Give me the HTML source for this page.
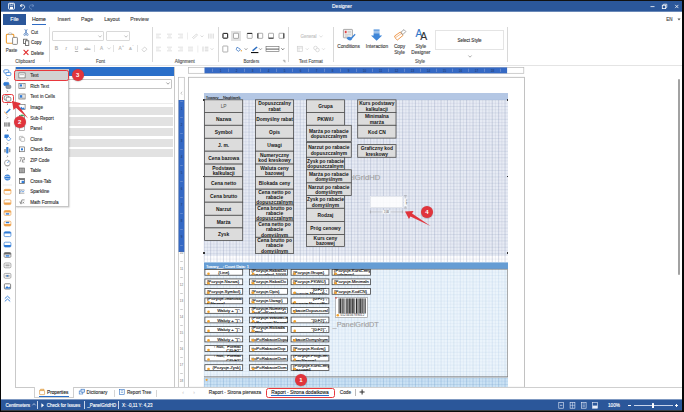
<!DOCTYPE html>
<html lang="en"><head><meta charset="utf-8"><title>Designer</title>
<style>
html,body{margin:0;padding:0;background:#fff;overflow:hidden}
body{width:684px;height:412px;position:relative;font-family:"Liberation Sans",sans-serif}
#w{position:absolute;left:0;top:0;width:684px;height:412px;overflow:hidden}
#w div{position:absolute}
.t{position:absolute;white-space:nowrap;line-height:1;-webkit-text-stroke:0.12px currentColor}
.a{position:absolute;overflow:visible}
.n{-webkit-text-stroke:0 !important}
#w .hc{background:#dcdcdc;border:0.7px solid #4a4a4a;box-sizing:border-box;color:#1a1a1a;font-weight:bold;text-align:center;overflow:hidden}
#w .hc .hi,#w .dc .hi{position:absolute;left:-10px;right:-10px;top:50%;transform:translateY(-50%);white-space:nowrap}
#w .hc .hi div,#w .dc .hi div{position:static}
#w .dc{background:#fff;border:0.7px solid #3c3c3c;box-sizing:border-box;color:#222;overflow:hidden}
#w .dc .hi{left:1px;right:1px}
#w .dc i{position:absolute;left:2.6px;bottom:-0.4px;width:2.4px;height:2.4px;border-radius:50%;background:#f0a030}
#w .bd{width:12.2px;height:12.2px;border-radius:50%;background:#e0343c;color:#fff;font-size:6px;line-height:12.4px;text-align:center;font-weight:bold;box-shadow:0 0.5px 1.2px rgba(0,0,0,0.3)}
</style></head><body><div id="w">
<div style="left:0px;top:0px;width:684px;height:412px;background:#fff"></div>
<svg class="a" style="left:0;top:0" width="684" height="13" viewBox="0 0 684 13"><rect width="684" height="11.7" fill="#2b579a"/><rect width="684" height="1" fill="#111"/></svg>
<div style="left:0px;top:0px;width:1px;height:412px;background:#060606"></div>
<div style="left:682.4px;top:0px;width:1.6px;height:412px;background:#060606"></div>
<span class="t" style="left:342px;top:3px;font-size:5.0px;line-height:6px;color:#fff;font-weight:normal;transform:translateX(-50%);">Designer</span>
<svg class="a" style="left:6.8px;top:2.2px" width="34" height="9" viewBox="0 0 34 9">
<rect x="1.5" y="1.2" width="6" height="6" rx="0.8" fill="none" stroke="#fff" stroke-width="0.8"/>
<rect x="3" y="1.4" width="3" height="1.8" fill="none" stroke="#fff" stroke-width="0.6"/>
<rect x="3" y="4.8" width="3" height="2.2" fill="#fff"/>
<path d="M14.5 2.2 L13.2 4 L15.2 4.4 M13.4 3.9 C15 2.2 18 3 17.6 5.2 C17.3 6.6 16 7.2 15 7.4" fill="none" stroke="#fff" stroke-width="0.9"/>
<path d="M25.5 2.2 L26.8 4 L24.8 4.4 M26.6 3.9 C25 2.2 22 3 22.4 5.2 C22.7 6.6 24 7.2 25 7.4" fill="none" stroke="#6f8fc4" stroke-width="0.8"/>
</svg>
<svg class="a" style="left:646px;top:2px" width="36" height="9" viewBox="0 0 36 9">
<path d="M4.5 4.6 H8.5" stroke="#fff" stroke-width="0.8"/>
<rect x="16.3" y="3.2" width="3.4" height="3.4" fill="none" stroke="#fff" stroke-width="0.8"/>
<path d="M17.6 3.2 V2.2 H20.8 V5.4 H19.7" fill="none" stroke="#fff" stroke-width="0.7"/>
<path d="M29.2 2.9 L32.4 6.1 M32.4 2.9 L29.2 6.1" stroke="#fff" stroke-width="0.8"/>
</svg>
<div style="left:3px;top:13.5px;width:23px;height:11px;background:#2b579a"></div>
<span class="t" style="left:14.5px;top:16px;font-size:5.2px;line-height:6px;color:#fff;font-weight:normal;transform:translateX(-50%);">File</span>
<span class="t" style="left:39px;top:16px;font-size:5.2px;line-height:6px;color:#222;font-weight:normal;transform:translateX(-50%);">Home</span>
<div style="left:32px;top:23.5px;width:14.2px;height:1.1px;background:#2f6bc4"></div>
<span class="t" style="left:64px;top:16px;font-size:5.2px;line-height:6px;color:#444;font-weight:normal;transform:translateX(-50%);">Insert</span>
<span class="t" style="left:87px;top:16px;font-size:5.2px;line-height:6px;color:#444;font-weight:normal;transform:translateX(-50%);">Page</span>
<span class="t" style="left:112px;top:16px;font-size:5.2px;line-height:6px;color:#444;font-weight:normal;transform:translateX(-50%);">Layout</span>
<span class="t" style="left:139.5px;top:16px;font-size:5.2px;line-height:6px;color:#444;font-weight:normal;transform:translateX(-50%);">Preview</span>
<span class="t" style="left:669.5px;top:17px;font-size:4.5px;line-height:5px;color:#444;font-weight:normal;transform:translateX(-50%);">EN</span>
<svg class="a" style="left:677px;top:17.6px" width="4" height="3"><path d="M0.5 0.6 L3.5 0.6 L2 2.4 Z" fill="#555"/></svg>
<div style="left:1px;top:65px;width:682px;height:0.7px;background:#e4e4e4"></div>
<div style="left:49.2px;top:27px;width:0.7px;height:35px;background:#d8d8d8"></div>
<div style="left:152px;top:27px;width:0.7px;height:35px;background:#d8d8d8"></div>
<div style="left:218.2px;top:27px;width:0.7px;height:35px;background:#d8d8d8"></div>
<div style="left:288px;top:27px;width:0.7px;height:35px;background:#d8d8d8"></div>
<div style="left:333.1px;top:27px;width:0.7px;height:35px;background:#d8d8d8"></div>
<div style="left:507.3px;top:27px;width:0.7px;height:35px;background:#d8d8d8"></div>
<span class="t" style="left:25px;top:59px;font-size:4.5px;line-height:5px;color:#555;font-weight:normal;transform:translateX(-50%);">Clipboard</span>
<span class="t" style="left:100.5px;top:59px;font-size:4.5px;line-height:5px;color:#555;font-weight:normal;transform:translateX(-50%);">Font</span>
<span class="t" style="left:184.7px;top:59px;font-size:4.5px;line-height:5px;color:#555;font-weight:normal;transform:translateX(-50%);">Alignment</span>
<span class="t" style="left:251.5px;top:59px;font-size:4.5px;line-height:5px;color:#555;font-weight:normal;transform:translateX(-50%);">Borders</span>
<span class="t" style="left:311px;top:59px;font-size:4.5px;line-height:5px;color:#555;font-weight:normal;transform:translateX(-50%);">Text Format</span>
<span class="t" style="left:420px;top:59px;font-size:4.5px;line-height:5px;color:#555;font-weight:normal;transform:translateX(-50%);">Style</span>
<svg class="a" style="left:4px;top:31px" width="16" height="15" viewBox="4 31 16 15">
<rect x="6.4" y="34.4" width="7.4" height="8.8" rx="0.9" fill="#fff" stroke="#f0a23a" stroke-width="1.15"/>
<path d="M8.6 34.6 V33.6 Q8.6 32.9 9.3 32.9 H11 Q11.7 32.9 11.7 33.6 V34.6 Z" fill="#fff" stroke="#9a9a9a" stroke-width="0.6"/>
<rect x="12.6" y="37.4" width="4.8" height="7" rx="0.7" fill="#fff" stroke="#6e6e6e" stroke-width="0.8"/>
</svg>
<span class="t" style="left:11.5px;top:48px;font-size:4.5px;line-height:5px;color:#444;font-weight:normal;transform:translateX(-50%);">Paste</span>
<svg class="a" style="left:22px;top:28px" width="9" height="29" viewBox="0 0 9 29">
<path d="M2.8 1.2 L5.2 6 M5.2 1.2 L2.8 6" stroke="#3b6fb6" stroke-width="0.7" fill="none"/>
<circle cx="2.7" cy="6.6" r="0.9" fill="none" stroke="#3b6fb6" stroke-width="0.6"/><circle cx="5.3" cy="6.6" r="0.9" fill="none" stroke="#3b6fb6" stroke-width="0.6"/>
<rect x="1.6" y="11.2" width="3.4" height="4.4" fill="#fff" stroke="#555" stroke-width="0.8"/>
<rect x="3.4" y="12.8" width="3.4" height="4.6" fill="#fff" stroke="#555" stroke-width="0.8"/>
<path d="M1.6 21.8 L6.4 26.8 M6.4 21.8 L1.6 26.8" stroke="#e02b2b" stroke-width="1.1"/>
</svg>
<span class="t" style="left:31px;top:30px;font-size:4.5px;line-height:5px;color:#333;font-weight:normal;">Cut</span>
<span class="t" style="left:31px;top:40px;font-size:4.5px;line-height:5px;color:#333;font-weight:normal;">Copy</span>
<span class="t" style="left:31px;top:51px;font-size:4.5px;line-height:5px;color:#333;font-weight:normal;">Delete</span>
<div style="left:51.5px;top:31px;width:52px;height:10px;border:0.7px solid #d9d9d9;border-radius:1px;box-sizing:border-box"></div>
<div style="left:105.5px;top:31px;width:24px;height:10px;border:0.7px solid #d9d9d9;border-radius:1px;box-sizing:border-box"></div>
<svg class="a" style="left:98px;top:34.5px" width="4" height="3"><path d="M0.4 0.5 L2 2.2 L3.6 0.5" fill="none" stroke="#999" stroke-width="0.6"/></svg>
<svg class="a" style="left:123.5px;top:34.5px" width="4" height="3"><path d="M0.4 0.5 L2 2.2 L3.6 0.5" fill="none" stroke="#999" stroke-width="0.6"/></svg>
<span class="t" style="left:56.5px;top:46px;font-size:4.6px;line-height:5px;color:#b5b5b5;font-weight:bold;transform:translateX(-50%);">B</span>
<span class="t" style="left:66px;top:46px;font-size:4.6px;line-height:5px;color:#b5b5b5;font-weight:normal;transform:translateX(-50%);font-style:italic;font-family:'Liberation Serif',serif">I</span>
<span class="t" style="left:76.5px;top:46px;font-size:4.6px;line-height:5px;color:#b5b5b5;font-weight:normal;transform:translateX(-50%);text-decoration:underline">U</span>
<span class="t" style="left:87.5px;top:47px;font-size:3.6px;line-height:4px;color:#b5b5b5;font-weight:normal;transform:translateX(-50%);text-decoration:line-through">abc</span>
<div style="left:94.2px;top:45px;width:0.6px;height:7px;background:#e2e2e2"></div>
<span class="t" style="left:101.5px;top:46px;font-size:4.6px;line-height:5px;color:#b5b5b5;font-weight:normal;transform:translateX(-50%);">A</span>
<svg class="a" style="left:106.5px;top:47.3px" width="4" height="3"><path d="M0.4 0.5 L2 2.2 L3.6 0.5" fill="none" stroke="#bbb" stroke-width="0.6"/></svg>
<div style="left:112.8px;top:45px;width:0.6px;height:7px;background:#e2e2e2"></div>
<span class="t" style="left:120px;top:46px;font-size:4.8px;line-height:5px;color:#b5b5b5;font-weight:normal;transform:translateX(-50%);">A</span>
<span class="t" style="left:123px;top:45px;font-size:3px;line-height:4px;color:#b5b5b5;font-weight:normal;transform:translateX(-50%);">^</span>
<span class="t" style="left:130.5px;top:46px;font-size:4.2px;line-height:5px;color:#b5b5b5;font-weight:normal;transform:translateX(-50%);">A</span>
<span class="t" style="left:133px;top:45px;font-size:3px;line-height:4px;color:#b5b5b5;font-weight:normal;transform:translateX(-50%);">ˇ</span>
<div style="left:136.6px;top:45px;width:0.6px;height:7px;background:#e2e2e2"></div>
<svg class="a" style="left:141px;top:45.5px" width="7" height="6" viewBox="0 0 7 6"><path d="M1 3.6 L3.6 1 L6 3.2 L3.8 5.4 L2.4 5.4 Z" fill="none" stroke="#bbb" stroke-width="0.6"/></svg>
<svg class="a" style="left:150px;top:28px" width="70" height="30" viewBox="150 28 70 30"><rect x="156.00" y="33.80" width="5" height="0.6" fill="#cdcdcd"/><rect x="156.00" y="35.70" width="3.4" height="0.6" fill="#cdcdcd"/><rect x="156.00" y="37.60" width="5" height="0.6" fill="#cdcdcd"/><rect x="167.00" y="33.80" width="5" height="0.6" fill="#cdcdcd"/><rect x="167.90" y="35.70" width="3.2" height="0.6" fill="#cdcdcd"/><rect x="167.00" y="37.60" width="5" height="0.6" fill="#cdcdcd"/><rect x="178.00" y="33.80" width="5" height="0.6" fill="#cdcdcd"/><rect x="179.60" y="35.70" width="3.4" height="0.6" fill="#cdcdcd"/><rect x="178.00" y="37.60" width="5" height="0.6" fill="#cdcdcd"/><rect x="156.00" y="46.80" width="5" height="0.6" fill="#cdcdcd"/><rect x="156.00" y="48.70" width="3.4" height="0.6" fill="#cdcdcd"/><rect x="156.00" y="50.60" width="5" height="0.6" fill="#cdcdcd"/><rect x="167.00" y="46.80" width="5" height="0.6" fill="#cdcdcd"/><rect x="167.90" y="48.70" width="3.2" height="0.6" fill="#cdcdcd"/><rect x="167.00" y="50.60" width="5" height="0.6" fill="#cdcdcd"/><rect x="178.00" y="46.80" width="5" height="0.6" fill="#cdcdcd"/><rect x="179.60" y="48.70" width="3.4" height="0.6" fill="#cdcdcd"/><rect x="178.00" y="50.60" width="5" height="0.6" fill="#cdcdcd"/><rect x="188.00" y="46.80" width="5" height="0.6" fill="#cdcdcd"/><rect x="188.00" y="48.70" width="5" height="0.6" fill="#cdcdcd"/><rect x="188.00" y="50.60" width="5" height="0.6" fill="#cdcdcd"/><rect x="187.3" y="32.5" width="0.6" height="7" fill="#e2e2e2"/><rect x="197.6" y="45.5" width="0.6" height="7" fill="#e2e2e2"/><path d="M192.5 37.5 L196.5 34 L197.5 35.2 L193.6 38.6 Z" fill="none" stroke="#c4c4c4" stroke-width="0.6"/><path d="M200.6 35.5 L202 37 L203.4 35.5" fill="none" stroke="#c4c4c4" stroke-width="0.6"/><path d="M208.8 33.6 V38.6 M211 33.6 V38.6 M213.2 33.6 V38.6" stroke="#c4c4c4" stroke-width="0.7"/><path d="M203 46.5 V51.6 M204.8 47.2 H208.4 M204.8 49 H208.4 M204.8 50.8 H208.4" stroke="#c4c4c4" stroke-width="0.7"/><path d="M210.6 48.3 L212 49.8 L213.4 48.3" fill="none" stroke="#c4c4c4" stroke-width="0.6"/></svg>
<div style="left:231px;top:31px;width:10px;height:10px;background:#e3e3e3"></div>
<svg class="a" style="left:220px;top:28px" width="68" height="36" viewBox="220 28 68 36"><rect x="222.8" y="33.25" width="5.0" height="5.1" rx="0.5" fill="#fff" stroke="#6f6f6f" stroke-width="0.55"/><rect x="223.0" y="33.45" width="4.6" height="4.699999999999999" rx="0.5" fill="none" stroke="#2a2a2a" stroke-width="1.0"/><rect x="233.5" y="33.25" width="5.0" height="5.1" rx="0.5" fill="#fff" stroke="#6f6f6f" stroke-width="0.55"/><rect x="247.2" y="33.25" width="5.0" height="5.1" rx="0.5" fill="#fff" stroke="#6f6f6f" stroke-width="0.55"/><path d="M247.2 33.45 H252.2" stroke="#2a2a2a" stroke-width="1.0"/><rect x="257.7" y="33.25" width="5.0" height="5.1" rx="0.5" fill="#fff" stroke="#6f6f6f" stroke-width="0.55"/><path d="M257.9 33.25 V38.349999999999994" stroke="#2a2a2a" stroke-width="1.0"/><rect x="268.5" y="33.25" width="5.0" height="5.1" rx="0.5" fill="#fff" stroke="#6f6f6f" stroke-width="0.55"/><path d="M268.5 38.14999999999999 H273.5" stroke="#2a2a2a" stroke-width="1.0"/><rect x="279.0" y="33.25" width="5.0" height="5.1" rx="0.5" fill="#fff" stroke="#6f6f6f" stroke-width="0.55"/><path d="M283.8 33.25 V38.349999999999994" stroke="#2a2a2a" stroke-width="1.0"/><rect x="222.8" y="46" width="5.0" height="6" rx="0.5" fill="#fff" stroke="#6f6f6f" stroke-width="0.55"/><path d="M237 47.2 L240.4 49.2 L238.6 51.4 L236.2 49.6 Z" fill="#fff" stroke="#2f6fc0" stroke-width="0.7"/><circle cx="241.3" cy="50.8" r="0.7" fill="#e8a33d"/><path d="M244.6 48.3 L246 49.8 L247.4 48.3" fill="none" stroke="#666" stroke-width="0.6"/><path d="M252 50.3 L256.6 46.4 L257.6 47.5 L253.2 51.2 Z" fill="#2f6fc0"/><rect x="251" y="52" width="7.4" height="1.1" fill="#111"/><path d="M259.1 48.3 L260.5 49.8 L261.9 48.3" fill="none" stroke="#666" stroke-width="0.6"/><rect x="266" y="46.6" width="13" height="5" fill="#fff" stroke="#666" stroke-width="0.6"/><path d="M266 49.1 H279" stroke="#444" stroke-width="0.9"/><path d="M281.4 48.3 L282.8 49.8 L284.2 48.3" fill="none" stroke="#444" stroke-width="0.7"/><path d="M283 60.3 H285 V62.3 M283.4 60.7 L285 62.3" fill="none" stroke="#777" stroke-width="0.5"/></svg>
<span class="t" style="left:308.5px;top:34px;font-size:4.5px;line-height:5px;color:#c2c2c2;font-weight:normal;transform:translateX(-50%);">General</span>
<svg class="a" style="left:319px;top:34.8px" width="4" height="3"><path d="M0.4 0.5 L2 2.2 L3.6 0.5" fill="none" stroke="#ccc" stroke-width="0.6"/></svg>
<svg class="a" style="left:296px;top:45px" width="32" height="9" viewBox="296 45 32 9">
<rect x="297.3" y="46.3" width="5" height="5" fill="none" stroke="#cfcfcf" stroke-width="0.7"/><path d="M297.3 48 H302.3 M299 48 V51.3" stroke="#cfcfcf" stroke-width="0.6"/>
<path d="M305.8 48.3 L307.2 49.8 L308.6 48.3" fill="none" stroke="#ccc" stroke-width="0.6"/>
<circle cx="315.5" cy="48" r="1.8" fill="none" stroke="#cfcfcf" stroke-width="0.7"/><circle cx="317.5" cy="50" r="1.8" fill="#fff" stroke="#cfcfcf" stroke-width="0.7"/>
<path d="M322.1 48.3 L323.5 49.8 L324.9 48.3" fill="none" stroke="#ccc" stroke-width="0.6"/>
</svg>
<svg class="a" style="left:340px;top:28px" width="90" height="16" viewBox="340 28 90 16">
<rect x="343.4" y="29.4" width="9" height="8.4" rx="0.5" fill="#f2f2f2" stroke="#8a8a8a" stroke-width="0.7"/>
<rect x="344.8" y="30.8" width="1.8" height="2.4" fill="#e04545"/><path d="M347.6 31.4 H351 M347.6 32.8 H351 M344.8 34.8 H351 M344.8 36.2 H348" stroke="#a5a5a5" stroke-width="0.5"/>
<path d="M346.6 38.6 C347.4 36.4 349.6 36.2 351 37.4 L354.8 33.8 L355.6 34.8 L352.2 38.6 C352.2 40.6 349 41.4 346.6 38.6 Z" fill="#3f86d8"/>
<path d="M373.6 29.6 H379.6 V30.7 H373.6 Z M373.6 31.4 H379.6 V32.5 H373.6 Z" fill="#3f86d8"/>
<path d="M373.6 33.2 H379.6 V35.6 H382.2 L376.6 40.8 L371 35.6 H373.6 Z" fill="#3f86d8"/>
<path d="M394.6 36 L400.4 32 L403 35.4 L397.4 40 C396 39.4 395 37.8 394.6 36 Z" fill="#fff" stroke="#ec8f3c" stroke-width="0.9"/>
<path d="M395.6 37.6 L401.6 33.4" stroke="#ec8f3c" stroke-width="0.6"/>
<path d="M401 32.2 L404 29.6 L405.8 31.6 L402.8 34.6 Z" fill="#fff" stroke="#7d7d7d" stroke-width="0.7"/>
</svg>
<span class="t" style="left:418.8px;top:28px;font-size:10px;line-height:11px;color:#2f74c8;font-weight:normal;transform:translateX(-50%);">A</span>
<span class="t" style="left:423.8px;top:31px;font-size:10.4px;line-height:11px;color:#333;font-weight:normal;transform:translateX(-50%);">A</span>
<span class="t" style="left:348.5px;top:44px;font-size:4.8px;line-height:5px;color:#444;font-weight:normal;transform:translateX(-50%);">Conditions</span>
<span class="t" style="left:377px;top:44px;font-size:4.8px;line-height:5px;color:#444;font-weight:normal;transform:translateX(-50%);">Interaction</span>
<span class="t" style="left:399.5px;top:44px;font-size:4.8px;line-height:5px;color:#444;font-weight:normal;transform:translateX(-50%);">Copy</span>
<span class="t" style="left:399.5px;top:50px;font-size:4.8px;line-height:5px;color:#444;font-weight:normal;transform:translateX(-50%);">Style</span>
<span class="t" style="left:420.8px;top:44px;font-size:4.8px;line-height:5px;color:#444;font-weight:normal;transform:translateX(-50%);">Style</span>
<span class="t" style="left:420.8px;top:50px;font-size:4.8px;line-height:5px;color:#444;font-weight:normal;transform:translateX(-50%);">Designer</span>
<div style="left:434.5px;top:30.4px;width:69.3px;height:20px;border:0.7px solid #e4e4e4;box-sizing:border-box;background:#fff"></div>
<span class="t" style="left:469.5px;top:38px;font-size:4.5px;line-height:5px;color:#333;font-weight:normal;transform:translateX(-50%);">Select Style</span>
<svg class="a" style="left:467.5px;top:55px" width="4" height="3"><path d="M0.4 0.5 L2 2.2 L3.6 0.5" fill="none" stroke="#777" stroke-width="0.6"/></svg>
<div style="left:15px;top:67px;width:159.5px;height:320.5px;border:0.7px solid #c9c9c9;box-sizing:border-box;background:#fff"></div>
<div style="left:15.5px;top:67px;width:158.5px;height:8.5px;background:#2a6fc9"></div>
<div style="left:17px;top:78.5px;width:155px;height:10px;border:0.7px solid #c4c4c4;box-sizing:border-box;border-radius:1px"></div>
<svg class="a" style="left:165.8px;top:82.4px" width="4" height="3"><path d="M0.4 0.5 L2 2.2 L3.6 0.5" fill="none" stroke="#666" stroke-width="0.6"/></svg>
<div style="left:17px;top:103.3px;width:156px;height:0.6px;background:#ececec"></div>
<div style="left:17px;top:106.8px;width:156px;height:8.3px;background:#e2e2e2"></div>
<div style="left:17px;top:117.4px;width:156px;height:8.3px;background:#e2e2e2"></div>
<div style="left:17px;top:128px;width:156px;height:8.3px;background:#e2e2e2"></div>
<div style="left:17px;top:138.6px;width:156px;height:8.3px;background:#e2e2e2"></div>
<div style="left:17px;top:149.2px;width:156px;height:8.3px;background:#e2e2e2"></div>
<div style="left:15px;top:387px;width:160px;height:0.7px;background:#c9c9c9"></div>
<div style="left:34.5px;top:387px;width:39px;height:0.7px;background:#fff"></div>
<div style="left:34.3px;top:387px;width:0.7px;height:10.4px;background:#cfcfcf"></div>
<div style="left:73.3px;top:387px;width:0.7px;height:10.4px;background:#cfcfcf"></div>
<div style="left:34.3px;top:396.9px;width:39.7px;height:0.6px;background:#cfcfcf"></div>
<div style="left:113.5px;top:389.5px;width:0.7px;height:7px;background:#d5d5d5"></div>
<div style="left:156px;top:389.5px;width:0.7px;height:7px;background:#d5d5d5"></div>
<div style="left:39px;top:396px;width:30px;height:0.9px;background:#2a6fc9"></div>
<span class="t" style="left:47px;top:390px;font-size:4.7px;line-height:5px;color:#222;font-weight:normal;">Properties</span>
<span class="t" style="left:86.5px;top:390px;font-size:4.7px;line-height:5px;color:#333;font-weight:normal;">Dictionary</span>
<span class="t" style="left:127px;top:390px;font-size:4.6px;line-height:5px;color:#333;font-weight:normal;">Report Tree</span>
<svg class="a" style="left:38px;top:388px" width="90" height="8" viewBox="38 388 90 8">
<path d="M39.6 390.6 L40.6 389.2 H44 V390.6 Z" fill="#f1c27a" stroke="#d58a2a" stroke-width="0.5"/><rect x="39.6" y="390.6" width="5" height="4" rx="0.4" fill="#fff" stroke="#d58a2a" stroke-width="0.6"/>
<rect x="79.2" y="391" width="3.6" height="3" fill="#fff" stroke="#2f6fc0" stroke-width="0.6"/><rect x="81" y="389.2" width="3.6" height="3" fill="#cfe0f5" stroke="#2f6fc0" stroke-width="0.6"/>
<rect x="119.6" y="389.3" width="4.6" height="5.2" fill="#fff" stroke="#2f6fc0" stroke-width="0.6"/><path d="M120.8 390.8 H123 M120.8 392.4 H123" stroke="#2f6fc0" stroke-width="0.5"/>
</svg>
<svg class="a" style="left:1px;top:66px" width="14" height="240" viewBox="1 66 14 240"><rect x="3.8" y="69.8" width="5" height="3.2" rx="1" fill="#fff" stroke="#2f7bd6" stroke-width="0.8"/><rect x="6" y="72.4" width="4.8" height="3.2" rx="1" fill="#fff" stroke="#2f7bd6" stroke-width="0.8"/><path d="M6.9 77.69999999999999 L7.8 78.6 L6.9 79.5" fill="none" stroke="#333" stroke-width="0.55"/><rect x="3.8" y="82.4" width="5" height="3.2" rx="1" fill="#2f7bd6" stroke="#2f7bd6" stroke-width="0.8"/><rect x="6" y="85.2" width="4.8" height="3.2" rx="1" fill="#8f9aa8" stroke="#6c7683" stroke-width="0.7"/><path d="M6.9 90.39999999999999 L7.8 91.3 L6.9 92.2" fill="none" stroke="#333" stroke-width="0.55"/><rect x="4.2" y="95.8" width="4.6" height="4.2" rx="1.1" fill="#fff" stroke="#666" stroke-width="0.7"/><rect x="6.2" y="97.2" width="4.6" height="4" rx="1.1" fill="#fff" stroke="#666" stroke-width="0.7"/><path d="M6.9 103.3 L7.8 104.2 L6.9 105.10000000000001" fill="none" stroke="#333" stroke-width="0.55"/><path d="M5.6 112.4 L9.6 108.4 L10.8 109.6 L6.8 113.6 Z" fill="#3f86d8"/><path d="M4.2 111.8 L7.4 114.8" stroke="#ee9a3e" stroke-width="0.9"/><path d="M6.9 116.69999999999999 L7.8 117.6 L6.9 118.5" fill="none" stroke="#333" stroke-width="0.55"/><path d="M4.6 122.4 V126.6 M5.9 122.4 V126.6 M7 122.4 V126.6 M8.4 122.4 V126.6 M9.6 122.4 V126.6" stroke="#555" stroke-width="0.7"/><path d="M6.9 129.29999999999998 L7.8 130.2 L6.9 131.1" fill="none" stroke="#333" stroke-width="0.55"/><rect x="4.4" y="134.4" width="4.4" height="3.6" rx="0.6" fill="#2f7bd6"/><path d="M8.6 136.6 L10.8 138.8 L8.6 141 L6.4 138.8 Z" fill="#fff" stroke="#2f7bd6" stroke-width="0.7"/><path d="M6.9 142.7 L7.8 143.6 L6.9 144.5" fill="none" stroke="#333" stroke-width="0.55"/><rect x="4.2" y="149" width="1.6" height="3.4" fill="#999"/><rect x="6.2" y="147" width="2.2" height="6.4" rx="0.6" fill="#2f7bd6"/><rect x="8.8" y="148.6" width="1.6" height="3.6" fill="#999"/><path d="M6.9 155.5 L7.8 156.4 L6.9 157.3" fill="none" stroke="#333" stroke-width="0.55"/><circle cx="7.4" cy="163" r="2.9" fill="#fff" stroke="#888" stroke-width="0.7"/><path d="M7.4 163 L8.8 161.2" stroke="#2f7bd6" stroke-width="0.7"/><path d="M5.6 165.8 H9.2" stroke="#888" stroke-width="0.6"/><path d="M6.9 168.5 L7.8 169.4 L6.9 170.3" fill="none" stroke="#333" stroke-width="0.55"/><circle cx="7.4" cy="177.6" r="3" fill="#2f7bd6"/><path d="M5 176.6 C6.4 175.6 8.4 177 9.8 176 M5.2 179 C6.6 178 8.2 179.4 9.6 178.6" stroke="#fff" stroke-width="0.7" fill="none"/><path d="M3 185 H12" stroke="#ddd" stroke-width="0.6"/><rect x="4.1" y="189.29999999999998" width="6.8" height="4.8" rx="1.1" fill="#fff" stroke="#eda04a" stroke-width="0.7"/><path d="M4.1 191.1 V190.39999999999998 Q4.1 189.29999999999998 5.2 189.29999999999998 H9.8 Q10.9 189.29999999999998 10.9 190.39999999999998 V191.1 Z" fill="#eda04a"/><rect x="4.1" y="199.79999999999998" width="6.8" height="4.8" rx="1.1" fill="#fff" stroke="#eda04a" stroke-width="0.7"/><path d="M4.1 202.6 V203.5 Q4.1 204.6 5.2 204.6 H9.8 Q10.9 204.6 10.9 203.5 V202.6 Z" fill="#eda04a"/><rect x="4.1" y="210.6" width="6.8" height="4.8" rx="1.1" fill="#fff" stroke="#eda04a" stroke-width="0.7"/><path d="M4.1 212.4 V211.7 Q4.1 210.6 5.2 210.6 H9.8 Q10.9 210.6 10.9 211.7 V212.4 Z" fill="#eda04a"/><rect x="5.8" y="213.2" width="3.4" height="1.4" fill="#2f7bd6"/><rect x="4.1" y="221.2" width="6.8" height="4.8" rx="1.1" fill="#fff" stroke="#eda04a" stroke-width="0.7"/><path d="M4.1 224.0 V224.9 Q4.1 226.0 5.2 226.0 H9.8 Q10.9 226.0 10.9 224.9 V224.0 Z" fill="#eda04a"/><rect x="5.8" y="221.8" width="3.4" height="1.4" fill="#2f7bd6"/><rect x="4.1" y="231.79999999999998" width="6.8" height="4.8" rx="1.1" fill="#fff" stroke="#2f7bd6" stroke-width="0.7"/><path d="M4.1 233.6 V232.89999999999998 Q4.1 231.79999999999998 5.2 231.79999999999998 H9.8 Q10.9 231.79999999999998 10.9 232.89999999999998 V233.6 Z" fill="#2f7bd6"/><rect x="4.1" y="242.2" width="6.8" height="4.8" rx="1.1" fill="#fff" stroke="#2f7bd6" stroke-width="0.7"/><path d="M4.1 245.0 V245.9 Q4.1 247.0 5.2 247.0 H9.8 Q10.9 247.0 10.9 245.9 V245.0 Z" fill="#2f7bd6"/><rect x="4.1" y="252.6" width="6.8" height="4.8" rx="1.1" fill="#fff" stroke="#666" stroke-width="0.7"/><path d="M4.1 254.4 V253.7 Q4.1 252.6 5.2 252.6 H9.8 Q10.9 252.6 10.9 253.7 V254.4 Z" fill="#666"/><rect x="5.6" y="255.2" width="3.8" height="1.4" fill="#2f7bd6"/><rect x="4.1" y="263.0" width="6.8" height="4.8" rx="1.1" fill="#fff" stroke="#888" stroke-width="0.7"/><rect x="5.4" y="264.4" width="4.2" height="2" fill="#aaa"/><rect x="4.1" y="273.40000000000003" width="6.8" height="4.8" rx="1.1" fill="#fff" stroke="#888" stroke-width="0.7"/><rect x="5.4" y="274.8" width="4.2" height="2" fill="#aaa"/><rect x="6.6" y="275.2" width="1.6" height="1.4" fill="#2f7bd6"/><rect x="4.4" y="283.8" width="6.2" height="5.2" rx="0.8" fill="#fff" stroke="#666" stroke-width="0.8"/><path d="M4.8 288.4 L7 286 L8.4 287.4 L9.4 286.6 L10.4 288.4 Z" fill="#2f7bd6"/><path d="M4.8 298.6 L7.5 296.2 L10.2 298.6 M4.8 301.4 L7.5 299 L10.2 301.4" fill="none" stroke="#2f7bd6" stroke-width="0.9"/></svg>
<div style="left:2px;top:94px;width:12px;height:9px;border:1px solid #e8383d;border-radius:2.5px;box-sizing:border-box"></div>
<svg class="a" style="left:187px;top:66px" width="339" height="9" viewBox="187 66 339 9" font-family="Liberation Sans, sans-serif"><rect x="188.5" y="67.4" width="335.3" height="5.9" fill="#fff" stroke="#b9b9b9" stroke-width="0.7"/><rect x="204.5" y="67.4" width="302.6" height="5.9" fill="#3569c4"/><rect x="212.25" y="68.7" width="0.5" height="3.2" fill="#93a9d8"/><rect x="228.25" y="68.7" width="0.5" height="3.2" fill="#93a9d8"/><text x="220.5" y="71.5" font-size="3" fill="#1b3160" text-anchor="middle">1</text><rect x="244.25" y="68.7" width="0.5" height="3.2" fill="#93a9d8"/><text x="236.5" y="71.5" font-size="3" fill="#1b3160" text-anchor="middle">2</text><rect x="260.25" y="68.7" width="0.5" height="3.2" fill="#93a9d8"/><text x="252.5" y="71.5" font-size="3" fill="#1b3160" text-anchor="middle">3</text><rect x="276.25" y="68.7" width="0.5" height="3.2" fill="#93a9d8"/><text x="268.5" y="71.5" font-size="3" fill="#1b3160" text-anchor="middle">4</text><rect x="292.25" y="68.7" width="0.5" height="3.2" fill="#93a9d8"/><text x="284.5" y="71.5" font-size="3" fill="#1b3160" text-anchor="middle">5</text><rect x="308.25" y="68.7" width="0.5" height="3.2" fill="#93a9d8"/><text x="300.5" y="71.5" font-size="3" fill="#1b3160" text-anchor="middle">6</text><rect x="324.25" y="68.7" width="0.5" height="3.2" fill="#93a9d8"/><text x="316.5" y="71.5" font-size="3" fill="#1b3160" text-anchor="middle">7</text><rect x="340.25" y="68.7" width="0.5" height="3.2" fill="#93a9d8"/><text x="332.5" y="71.5" font-size="3" fill="#1b3160" text-anchor="middle">8</text><rect x="356.25" y="68.7" width="0.5" height="3.2" fill="#93a9d8"/><text x="348.5" y="71.5" font-size="3" fill="#1b3160" text-anchor="middle">9</text><rect x="372.25" y="68.7" width="0.5" height="3.2" fill="#93a9d8"/><text x="364.5" y="71.5" font-size="3" fill="#1b3160" text-anchor="middle">10</text><rect x="388.25" y="68.7" width="0.5" height="3.2" fill="#93a9d8"/><text x="380.5" y="71.5" font-size="3" fill="#1b3160" text-anchor="middle">11</text><rect x="404.25" y="68.7" width="0.5" height="3.2" fill="#93a9d8"/><text x="396.5" y="71.5" font-size="3" fill="#1b3160" text-anchor="middle">12</text><rect x="420.25" y="68.7" width="0.5" height="3.2" fill="#93a9d8"/><text x="412.5" y="71.5" font-size="3" fill="#1b3160" text-anchor="middle">13</text><rect x="436.25" y="68.7" width="0.5" height="3.2" fill="#93a9d8"/><text x="428.5" y="71.5" font-size="3" fill="#1b3160" text-anchor="middle">14</text><rect x="452.25" y="68.7" width="0.5" height="3.2" fill="#93a9d8"/><text x="444.5" y="71.5" font-size="3" fill="#1b3160" text-anchor="middle">15</text><rect x="468.25" y="68.7" width="0.5" height="3.2" fill="#93a9d8"/><text x="460.5" y="71.5" font-size="3" fill="#1b3160" text-anchor="middle">16</text><rect x="484.25" y="68.7" width="0.5" height="3.2" fill="#93a9d8"/><text x="476.5" y="71.5" font-size="3" fill="#1b3160" text-anchor="middle">17</text><rect x="500.25" y="68.7" width="0.5" height="3.2" fill="#93a9d8"/><text x="492.5" y="71.5" font-size="3" fill="#1b3160" text-anchor="middle">18</text></svg>
<svg class="a" style="left:177px;top:76px" width="9" height="313" viewBox="177 76 9 313" font-family="Liberation Sans, sans-serif"><rect x="178.6" y="77.3" width="5.7" height="310" fill="#fff" stroke="#b9b9b9" stroke-width="0.7"/><rect x="178.6" y="100" width="5.7" height="152" fill="#3569c4"/><path d="M182.1 91.7L180.9 93.2L182.1 94.7" fill="none" stroke="#888" stroke-width="0.5"/><rect x="180.2" y="101.05" width="2.6" height="0.5" fill="#93a9d8"/><text x="181.5" y="110.3" font-size="3" fill="#1b3160" text-anchor="middle">1</text><rect x="180.2" y="117.05" width="2.6" height="0.5" fill="#93a9d8"/><text x="181.5" y="126.3" font-size="3" fill="#1b3160" text-anchor="middle">2</text><rect x="180.2" y="133.05" width="2.6" height="0.5" fill="#93a9d8"/><text x="181.5" y="142.3" font-size="3" fill="#1b3160" text-anchor="middle">3</text><rect x="180.2" y="149.05" width="2.6" height="0.5" fill="#93a9d8"/><text x="181.5" y="158.3" font-size="3" fill="#1b3160" text-anchor="middle">4</text><rect x="180.2" y="165.05" width="2.6" height="0.5" fill="#93a9d8"/><text x="181.5" y="174.3" font-size="3" fill="#1b3160" text-anchor="middle">5</text><rect x="180.2" y="181.05" width="2.6" height="0.5" fill="#93a9d8"/><text x="181.5" y="190.3" font-size="3" fill="#1b3160" text-anchor="middle">6</text><rect x="180.2" y="197.05" width="2.6" height="0.5" fill="#93a9d8"/><text x="181.5" y="206.3" font-size="3" fill="#1b3160" text-anchor="middle">7</text><rect x="180.2" y="213.05" width="2.6" height="0.5" fill="#93a9d8"/><text x="181.5" y="222.3" font-size="3" fill="#1b3160" text-anchor="middle">8</text><rect x="180.2" y="229.05" width="2.6" height="0.5" fill="#93a9d8"/><text x="181.5" y="238.3" font-size="3" fill="#1b3160" text-anchor="middle">9</text><rect x="180.2" y="245.05" width="2.6" height="0.5" fill="#93a9d8"/><text x="181.5" y="254.3" font-size="3" fill="#666" text-anchor="middle">10</text><rect x="180.2" y="261.05" width="2.6" height="0.5" fill="#9a9a9a"/><text x="181.5" y="270.3" font-size="3" fill="#666" text-anchor="middle">11</text><rect x="180.2" y="277.05" width="2.6" height="0.5" fill="#9a9a9a"/><text x="181.5" y="286.3" font-size="3" fill="#666" text-anchor="middle">12</text><rect x="180.2" y="293.05" width="2.6" height="0.5" fill="#9a9a9a"/><text x="181.5" y="302.3" font-size="3" fill="#666" text-anchor="middle">13</text><rect x="180.2" y="309.05" width="2.6" height="0.5" fill="#9a9a9a"/><text x="181.5" y="318.3" font-size="3" fill="#666" text-anchor="middle">14</text><rect x="180.2" y="325.05" width="2.6" height="0.5" fill="#9a9a9a"/><text x="181.5" y="334.3" font-size="3" fill="#666" text-anchor="middle">15</text><rect x="180.2" y="341.05" width="2.6" height="0.5" fill="#9a9a9a"/><text x="181.5" y="350.3" font-size="3" fill="#666" text-anchor="middle">16</text><rect x="180.2" y="357.05" width="2.6" height="0.5" fill="#9a9a9a"/><text x="181.5" y="366.3" font-size="3" fill="#666" text-anchor="middle">17</text><rect x="180.2" y="373.05" width="2.6" height="0.5" fill="#9a9a9a"/><text x="181.5" y="382.3" font-size="3" fill="#666" text-anchor="middle">18</text></svg>
<svg class="a" style="left:187px;top:76px" width="340" height="313" viewBox="187 76 340 313"><rect x="188.5" y="77.3" width="336" height="310" fill="#fff" stroke="#b4b4b4" stroke-width="0.8"/></svg>
<div style="left:204px;top:93px;width:304px;height:7px;background:#b4c7e4"></div>
<span class="t" style="left:205.8px;top:95px;font-size:4.0px;line-height:5px;color:#2a2a2a;font-weight:normal;text-decoration:underline">Towary__Nagłówek</span>
<svg class="a" style="left:204px;top:100px" width="304" height="156.39999999999998" viewBox="204 100 304 156.39999999999998"><rect x="204" y="100" width="304" height="156.39999999999998" fill="#e7ebf4"/><g stroke="#8795b4" fill="none"><path d="M204.25 100V256.4M210.65 100V256.4M217.05 100V256.4M223.45 100V256.4M229.85 100V256.4M236.25 100V256.4M242.65 100V256.4M249.05 100V256.4M255.45 100V256.4M261.85 100V256.4M268.25 100V256.4M274.65 100V256.4M281.05 100V256.4M287.45 100V256.4M293.85 100V256.4M300.25 100V256.4M306.65 100V256.4M313.05 100V256.4M319.45 100V256.4M325.85 100V256.4M332.25 100V256.4M338.65 100V256.4M345.05 100V256.4M351.45 100V256.4M357.85 100V256.4M364.25 100V256.4M370.65 100V256.4M377.05 100V256.4M383.45 100V256.4M389.85 100V256.4M396.25 100V256.4M402.65 100V256.4M409.05 100V256.4M415.45 100V256.4M421.85 100V256.4M428.25 100V256.4M434.65 100V256.4M441.05 100V256.4M447.45 100V256.4M453.85 100V256.4M460.25 100V256.4M466.65 100V256.4M473.05 100V256.4M479.45 100V256.4M485.85 100V256.4M492.25 100V256.4M498.65 100V256.4M505.05 100V256.4" stroke-width="0.33"/><path d="M207.45 100V256.4M213.85 100V256.4M220.25 100V256.4M226.65 100V256.4M233.05 100V256.4M239.45 100V256.4M245.85 100V256.4M252.25 100V256.4M258.65 100V256.4M265.05 100V256.4M271.45 100V256.4M277.85 100V256.4M284.25 100V256.4M290.65 100V256.4M297.05 100V256.4M303.45 100V256.4M309.85 100V256.4M316.25 100V256.4M322.65 100V256.4M329.05 100V256.4M335.45 100V256.4M341.85 100V256.4M348.25 100V256.4M354.65 100V256.4M361.05 100V256.4M367.45 100V256.4M373.85 100V256.4M380.25 100V256.4M386.65 100V256.4M393.05 100V256.4M399.45 100V256.4M405.85 100V256.4M412.25 100V256.4M418.65 100V256.4M425.05 100V256.4M431.45 100V256.4M437.85 100V256.4M444.25 100V256.4M450.65 100V256.4M457.05 100V256.4M463.45 100V256.4M469.85 100V256.4M476.25 100V256.4M482.65 100V256.4M489.05 100V256.4M495.45 100V256.4M501.85 100V256.4" stroke-width="0.149"/><path d="M204 100.10H508M204 106.50H508M204 112.90H508M204 119.30H508M204 125.70H508M204 132.10H508M204 138.50H508M204 144.90H508M204 151.30H508M204 157.70H508M204 164.10H508M204 170.50H508M204 176.90H508M204 183.30H508M204 189.70H508M204 196.10H508M204 202.50H508M204 208.90H508M204 215.30H508M204 221.70H508M204 228.10H508M204 234.50H508M204 240.90H508M204 247.30H508M204 253.70H508" stroke-width="0.198"/><path d="M204 103.30H508M204 109.70H508M204 116.10H508M204 122.50H508M204 128.90H508M204 135.30H508M204 141.70H508M204 148.10H508M204 154.50H508M204 160.90H508M204 167.30H508M204 173.70H508M204 180.10H508M204 186.50H508M204 192.90H508M204 199.30H508M204 205.70H508M204 212.10H508M204 218.50H508M204 224.90H508M204 231.30H508M204 237.70H508M204 244.10H508M204 250.50H508" stroke-width="0.115"/></g></svg>
<svg class="a" style="left:204px;top:256.4px" width="304" height="6.0" viewBox="204 256.4 304 6.0"><rect x="204" y="256.4" width="304" height="6.0" fill="#fdfdfe"/><g stroke="#8795b4" fill="none"><path d="M204.25 256.4V262.4M210.65 256.4V262.4M217.05 256.4V262.4M223.45 256.4V262.4M229.85 256.4V262.4M236.25 256.4V262.4M242.65 256.4V262.4M249.05 256.4V262.4M255.45 256.4V262.4M261.85 256.4V262.4M268.25 256.4V262.4M274.65 256.4V262.4M281.05 256.4V262.4M287.45 256.4V262.4M293.85 256.4V262.4M300.25 256.4V262.4M306.65 256.4V262.4M313.05 256.4V262.4M319.45 256.4V262.4M325.85 256.4V262.4M332.25 256.4V262.4M338.65 256.4V262.4M345.05 256.4V262.4M351.45 256.4V262.4M357.85 256.4V262.4M364.25 256.4V262.4M370.65 256.4V262.4M377.05 256.4V262.4M383.45 256.4V262.4M389.85 256.4V262.4M396.25 256.4V262.4M402.65 256.4V262.4M409.05 256.4V262.4M415.45 256.4V262.4M421.85 256.4V262.4M428.25 256.4V262.4M434.65 256.4V262.4M441.05 256.4V262.4M447.45 256.4V262.4M453.85 256.4V262.4M460.25 256.4V262.4M466.65 256.4V262.4M473.05 256.4V262.4M479.45 256.4V262.4M485.85 256.4V262.4M492.25 256.4V262.4M498.65 256.4V262.4M505.05 256.4V262.4" stroke-width="0.33"/><path d="M207.45 256.4V262.4M213.85 256.4V262.4M220.25 256.4V262.4M226.65 256.4V262.4M233.05 256.4V262.4M239.45 256.4V262.4M245.85 256.4V262.4M252.25 256.4V262.4M258.65 256.4V262.4M265.05 256.4V262.4M271.45 256.4V262.4M277.85 256.4V262.4M284.25 256.4V262.4M290.65 256.4V262.4M297.05 256.4V262.4M303.45 256.4V262.4M309.85 256.4V262.4M316.25 256.4V262.4M322.65 256.4V262.4M329.05 256.4V262.4M335.45 256.4V262.4M341.85 256.4V262.4M348.25 256.4V262.4M354.65 256.4V262.4M361.05 256.4V262.4M367.45 256.4V262.4M373.85 256.4V262.4M380.25 256.4V262.4M386.65 256.4V262.4M393.05 256.4V262.4M399.45 256.4V262.4M405.85 256.4V262.4M412.25 256.4V262.4M418.65 256.4V262.4M425.05 256.4V262.4M431.45 256.4V262.4M437.85 256.4V262.4M444.25 256.4V262.4M450.65 256.4V262.4M457.05 256.4V262.4M463.45 256.4V262.4M469.85 256.4V262.4M476.25 256.4V262.4M482.65 256.4V262.4M489.05 256.4V262.4M495.45 256.4V262.4M501.85 256.4V262.4" stroke-width="0.149"/><path d="" stroke-width="0.198"/><path d="M204 259.50H508" stroke-width="0.115"/></g></svg>
<svg class="a" style="left:204px;top:262px" width="304" height="8" viewBox="204 262 304 8"><rect x="204" y="262.4" width="304" height="6.8" fill="#669dd4"/></svg>
<span class="t" style="left:206px;top:264px;font-size:3.9px;line-height:5px;color:#fff;font-weight:normal;">Towary__; Count Data: 1</span>
<svg class="a" style="left:204px;top:269.2px" width="304" height="108.30000000000001" viewBox="204 269.2 304 108.30000000000001"><rect x="204" y="269.2" width="304" height="108.30000000000001" fill="#ebf4fb"/><g stroke="#a9c5e5" fill="none"><path d="M204.25 269.2V377.5M210.65 269.2V377.5M217.05 269.2V377.5M223.45 269.2V377.5M229.85 269.2V377.5M236.25 269.2V377.5M242.65 269.2V377.5M249.05 269.2V377.5M255.45 269.2V377.5M261.85 269.2V377.5M268.25 269.2V377.5M274.65 269.2V377.5M281.05 269.2V377.5M287.45 269.2V377.5M293.85 269.2V377.5M300.25 269.2V377.5M306.65 269.2V377.5M313.05 269.2V377.5M319.45 269.2V377.5M325.85 269.2V377.5M332.25 269.2V377.5M338.65 269.2V377.5M345.05 269.2V377.5M351.45 269.2V377.5M357.85 269.2V377.5M364.25 269.2V377.5M370.65 269.2V377.5M377.05 269.2V377.5M383.45 269.2V377.5M389.85 269.2V377.5M396.25 269.2V377.5M402.65 269.2V377.5M409.05 269.2V377.5M415.45 269.2V377.5M421.85 269.2V377.5M428.25 269.2V377.5M434.65 269.2V377.5M441.05 269.2V377.5M447.45 269.2V377.5M453.85 269.2V377.5M460.25 269.2V377.5M466.65 269.2V377.5M473.05 269.2V377.5M479.45 269.2V377.5M485.85 269.2V377.5M492.25 269.2V377.5M498.65 269.2V377.5M505.05 269.2V377.5" stroke-width="0.3"/><path d="M207.45 269.2V377.5M213.85 269.2V377.5M220.25 269.2V377.5M226.65 269.2V377.5M233.05 269.2V377.5M239.45 269.2V377.5M245.85 269.2V377.5M252.25 269.2V377.5M258.65 269.2V377.5M265.05 269.2V377.5M271.45 269.2V377.5M277.85 269.2V377.5M284.25 269.2V377.5M290.65 269.2V377.5M297.05 269.2V377.5M303.45 269.2V377.5M309.85 269.2V377.5M316.25 269.2V377.5M322.65 269.2V377.5M329.05 269.2V377.5M335.45 269.2V377.5M341.85 269.2V377.5M348.25 269.2V377.5M354.65 269.2V377.5M361.05 269.2V377.5M367.45 269.2V377.5M373.85 269.2V377.5M380.25 269.2V377.5M386.65 269.2V377.5M393.05 269.2V377.5M399.45 269.2V377.5M405.85 269.2V377.5M412.25 269.2V377.5M418.65 269.2V377.5M425.05 269.2V377.5M431.45 269.2V377.5M437.85 269.2V377.5M444.25 269.2V377.5M450.65 269.2V377.5M457.05 269.2V377.5M463.45 269.2V377.5M469.85 269.2V377.5M476.25 269.2V377.5M482.65 269.2V377.5M489.05 269.2V377.5M495.45 269.2V377.5M501.85 269.2V377.5" stroke-width="0.135"/><path d="M204 269.30H508M204 275.70H508M204 282.10H508M204 288.50H508M204 294.90H508M204 301.30H508M204 307.70H508M204 314.10H508M204 320.50H508M204 326.90H508M204 333.30H508M204 339.70H508M204 346.10H508M204 352.50H508M204 358.90H508M204 365.30H508M204 371.70H508" stroke-width="0.180"/><path d="M204 272.50H508M204 278.90H508M204 285.30H508M204 291.70H508M204 298.10H508M204 304.50H508M204 310.90H508M204 317.30H508M204 323.70H508M204 330.10H508M204 336.50H508M204 342.90H508M204 349.30H508M204 355.70H508M204 362.10H508M204 368.50H508M204 374.90H508" stroke-width="0.105"/></g><path d="M204 269.5H507.6" stroke="#6e6e6e" stroke-width="0.6" fill="none"/><path d="M507.5 269.2V377.1" stroke="#a0a0a0" stroke-width="0.9" fill="none"/><path d="M507.9 377.1H204" stroke="#5f5f5f" stroke-width="0.8" fill="none"/></svg>
<svg class="a" style="left:204px;top:377.5px" width="304" height="9.5" viewBox="204 377.5 304 9.5"><rect x="204" y="377.5" width="304" height="9.5" fill="#cbe2f4"/><g stroke="#6f9fcc" fill="none"><path d="M204.25 377.5V387M210.65 377.5V387M217.05 377.5V387M223.45 377.5V387M229.85 377.5V387M236.25 377.5V387M242.65 377.5V387M249.05 377.5V387M255.45 377.5V387M261.85 377.5V387M268.25 377.5V387M274.65 377.5V387M281.05 377.5V387M287.45 377.5V387M293.85 377.5V387M300.25 377.5V387M306.65 377.5V387M313.05 377.5V387M319.45 377.5V387M325.85 377.5V387M332.25 377.5V387M338.65 377.5V387M345.05 377.5V387M351.45 377.5V387M357.85 377.5V387M364.25 377.5V387M370.65 377.5V387M377.05 377.5V387M383.45 377.5V387M389.85 377.5V387M396.25 377.5V387M402.65 377.5V387M409.05 377.5V387M415.45 377.5V387M421.85 377.5V387M428.25 377.5V387M434.65 377.5V387M441.05 377.5V387M447.45 377.5V387M453.85 377.5V387M460.25 377.5V387M466.65 377.5V387M473.05 377.5V387M479.45 377.5V387M485.85 377.5V387M492.25 377.5V387M498.65 377.5V387M505.05 377.5V387" stroke-width="0.36"/><path d="M207.45 377.5V387M213.85 377.5V387M220.25 377.5V387M226.65 377.5V387M233.05 377.5V387M239.45 377.5V387M245.85 377.5V387M252.25 377.5V387M258.65 377.5V387M265.05 377.5V387M271.45 377.5V387M277.85 377.5V387M284.25 377.5V387M290.65 377.5V387M297.05 377.5V387M303.45 377.5V387M309.85 377.5V387M316.25 377.5V387M322.65 377.5V387M329.05 377.5V387M335.45 377.5V387M341.85 377.5V387M348.25 377.5V387M354.65 377.5V387M361.05 377.5V387M367.45 377.5V387M373.85 377.5V387M380.25 377.5V387M386.65 377.5V387M393.05 377.5V387M399.45 377.5V387M405.85 377.5V387M412.25 377.5V387M418.65 377.5V387M425.05 377.5V387M431.45 377.5V387M437.85 377.5V387M444.25 377.5V387M450.65 377.5V387M457.05 377.5V387M463.45 377.5V387M469.85 377.5V387M476.25 377.5V387M482.65 377.5V387M489.05 377.5V387M495.45 377.5V387M501.85 377.5V387" stroke-width="0.162"/><path d="M204 377.60H508M204 384.00H508" stroke-width="0.216"/><path d="M204 380.80H508" stroke-width="0.126"/></g></svg>
<div style="left:203.4px;top:99.4px;width:1.4px;height:1.4px;background:#333"></div>
<div style="left:507.09999999999997px;top:99.4px;width:1.4px;height:1.4px;background:#333"></div>
<div style="left:203.4px;top:175.9px;width:1.4px;height:1.4px;background:#333"></div>
<div style="left:507.09999999999997px;top:175.9px;width:1.4px;height:1.4px;background:#333"></div>
<div style="left:203.4px;top:252.4px;width:1.4px;height:1.4px;background:#333"></div>
<div style="left:507.09999999999997px;top:252.4px;width:1.4px;height:1.4px;background:#333"></div>
<span class="t" style="left:380.4px;top:173px;font-size:7.7px;line-height:9px;color:#a0a0a0;font-weight:normal;transform:translateX(-100%);">_PanelGridHD</span>
<svg class="a" style="left:200px;top:95px" width="210" height="165" viewBox="200 95 210 165"><g fill="#dcdcdc" stroke="#4e4e4e" stroke-width="0.8"><rect x="204.60" y="99.80" width="38.10" height="12.60"/><rect x="204.60" y="112.40" width="38.10" height="12.90"/><rect x="204.60" y="125.30" width="38.10" height="13.00"/><rect x="204.60" y="138.30" width="38.10" height="12.90"/><rect x="204.60" y="151.20" width="38.10" height="12.90"/><rect x="204.60" y="164.10" width="38.10" height="12.60"/><rect x="204.60" y="176.70" width="38.10" height="12.50"/><rect x="204.60" y="189.20" width="38.10" height="13.00"/><rect x="204.60" y="202.20" width="38.10" height="13.10"/><rect x="204.60" y="215.30" width="38.10" height="12.60"/><rect x="204.60" y="227.90" width="38.10" height="12.50"/><rect x="255.50" y="99.80" width="38.10" height="12.60"/><rect x="255.50" y="112.40" width="38.10" height="12.90"/><rect x="255.50" y="125.30" width="38.10" height="13.00"/><rect x="255.50" y="138.30" width="38.10" height="12.90"/><rect x="255.50" y="151.20" width="38.10" height="12.90"/><rect x="255.50" y="164.10" width="38.10" height="12.60"/><rect x="255.50" y="176.70" width="38.10" height="12.50"/><rect x="255.50" y="189.20" width="38.10" height="15.80"/><rect x="255.50" y="205.00" width="38.10" height="16.00"/><rect x="255.50" y="221.00" width="38.10" height="16.30"/><rect x="255.50" y="237.30" width="38.10" height="16.20"/><rect x="306.40" y="99.80" width="38.10" height="12.60"/><rect x="306.40" y="112.40" width="38.10" height="12.90"/><rect x="306.40" y="125.30" width="44.90" height="16.10"/><rect x="306.40" y="142.50" width="44.90" height="14.80"/><rect x="306.40" y="157.30" width="38.10" height="12.50"/><rect x="306.40" y="169.80" width="44.90" height="13.10"/><rect x="306.40" y="182.90" width="44.90" height="12.70"/><rect x="306.40" y="195.60" width="38.10" height="12.70"/><rect x="306.40" y="208.30" width="38.10" height="13.10"/><rect x="306.40" y="221.40" width="38.10" height="13.10"/><rect x="306.40" y="234.50" width="38.10" height="12.00"/><rect x="357.70" y="99.80" width="38.30" height="12.60"/><rect x="357.70" y="112.40" width="38.30" height="12.90"/><rect x="357.70" y="125.30" width="38.30" height="12.80"/><rect x="357.70" y="144.60" width="38.30" height="12.70"/></g></svg>
<div style="left:205px;top:100px;width:38px;height:13px;overflow:hidden"><span class="t n" style="left:18.65px;transform:translateX(-50%);top:4px;font-size:4.9px;line-height:5px;color:#555;font-weight:normal">LP</span></div><div style="left:205px;top:112px;width:38px;height:13px;overflow:hidden"><span class="t n" style="left:18.65px;transform:translateX(-50%);top:5px;font-size:4.9px;line-height:5px;color:#151515;font-weight:bold">Nazwa</span></div><div style="left:205px;top:125px;width:38px;height:13px;overflow:hidden"><span class="t n" style="left:18.65px;transform:translateX(-50%);top:5px;font-size:4.9px;line-height:5px;color:#151515;font-weight:bold">Symbol</span></div><div style="left:205px;top:138px;width:38px;height:13px;overflow:hidden"><span class="t n" style="left:18.65px;transform:translateX(-50%);top:5px;font-size:4.9px;line-height:5px;color:#151515;font-weight:bold">J. m.</span></div><div style="left:205px;top:151px;width:38px;height:13px;overflow:hidden"><span class="t n" style="left:18.65px;transform:translateX(-50%);top:5px;font-size:4.9px;line-height:5px;color:#151515;font-weight:bold">Cena bazowa</span></div><div style="left:205px;top:164px;width:38px;height:13px;overflow:hidden"><span class="t n" style="left:18.65px;transform:translateX(-50%);top:2px;font-size:4.9px;line-height:5px;color:#151515;font-weight:bold">Podstawa</span><span class="t n" style="left:18.65px;transform:translateX(-50%);top:7px;font-size:4.9px;line-height:5px;color:#151515;font-weight:bold">kalkulacji</span></div><div style="left:205px;top:177px;width:38px;height:12px;overflow:hidden"><span class="t n" style="left:18.65px;transform:translateX(-50%);top:4px;font-size:4.9px;line-height:5px;color:#151515;font-weight:bold">Cena netto</span></div><div style="left:205px;top:189px;width:38px;height:13px;overflow:hidden"><span class="t n" style="left:18.65px;transform:translateX(-50%);top:5px;font-size:4.9px;line-height:5px;color:#151515;font-weight:bold">Cena brutto</span></div><div style="left:205px;top:202px;width:38px;height:13px;overflow:hidden"><span class="t n" style="left:18.65px;transform:translateX(-50%);top:5px;font-size:4.9px;line-height:5px;color:#151515;font-weight:bold">Narzut</span></div><div style="left:205px;top:215px;width:38px;height:13px;overflow:hidden"><span class="t n" style="left:18.65px;transform:translateX(-50%);top:5px;font-size:4.9px;line-height:5px;color:#151515;font-weight:bold">Marża</span></div><div style="left:205px;top:228px;width:38px;height:12px;overflow:hidden"><span class="t n" style="left:18.65px;transform:translateX(-50%);top:4px;font-size:4.9px;line-height:5px;color:#151515;font-weight:bold">Zysk</span></div><div style="left:255px;top:100px;width:39px;height:13px;overflow:hidden"><span class="t n" style="left:19.55px;transform:translateX(-50%);top:1px;font-size:4.9px;line-height:5px;color:#151515;font-weight:bold">Dopuszczalny</span><span class="t n" style="left:19.55px;transform:translateX(-50%);top:7px;font-size:4.9px;line-height:5px;color:#151515;font-weight:bold">rabat</span></div><div style="left:255px;top:112px;width:39px;height:13px;overflow:hidden"><span class="t n" style="left:19.55px;transform:translateX(-50%);top:5px;font-size:4.9px;line-height:5px;color:#151515;font-weight:bold">Domyślny rabat</span></div><div style="left:255px;top:125px;width:39px;height:13px;overflow:hidden"><span class="t n" style="left:19.55px;transform:translateX(-50%);top:5px;font-size:4.9px;line-height:5px;color:#151515;font-weight:bold">Opis</span></div><div style="left:255px;top:138px;width:39px;height:13px;overflow:hidden"><span class="t n" style="left:19.55px;transform:translateX(-50%);top:5px;font-size:4.9px;line-height:5px;color:#151515;font-weight:bold">Uwagi</span></div><div style="left:255px;top:151px;width:39px;height:13px;overflow:hidden"><span class="t n" style="left:19.55px;transform:translateX(-50%);top:2px;font-size:4.9px;line-height:5px;color:#151515;font-weight:bold">Numeryczny</span><span class="t n" style="left:19.55px;transform:translateX(-50%);top:7px;font-size:4.9px;line-height:5px;color:#151515;font-weight:bold">kod kreskowy</span></div><div style="left:255px;top:164px;width:39px;height:13px;overflow:hidden"><span class="t n" style="left:19.55px;transform:translateX(-50%);top:2px;font-size:4.9px;line-height:5px;color:#151515;font-weight:bold">Waluta ceny</span><span class="t n" style="left:19.55px;transform:translateX(-50%);top:7px;font-size:4.9px;line-height:5px;color:#151515;font-weight:bold">bazowej</span></div><div style="left:255px;top:177px;width:39px;height:12px;overflow:hidden"><span class="t n" style="left:19.55px;transform:translateX(-50%);top:4px;font-size:4.9px;line-height:5px;color:#151515;font-weight:bold">Blokada ceny</span></div><div style="left:255px;top:189px;width:39px;height:16px;overflow:hidden"><span class="t n" style="left:19.55px;transform:translateX(-50%);top:1px;font-size:4.9px;line-height:5px;color:#151515;font-weight:bold">Cena netto po</span><span class="t n" style="left:19.55px;transform:translateX(-50%);top:6px;font-size:4.9px;line-height:5px;color:#151515;font-weight:bold">rabacie</span><span class="t n" style="left:19.55px;transform:translateX(-50%);top:11px;font-size:4.9px;line-height:5px;color:#151515;font-weight:bold">dopuszczalnym</span></div><div style="left:255px;top:205px;width:39px;height:16px;overflow:hidden"><span class="t n" style="left:19.55px;transform:translateX(-50%);top:1px;font-size:4.9px;line-height:5px;color:#151515;font-weight:bold">Cena brutto po</span><span class="t n" style="left:19.55px;transform:translateX(-50%);top:6px;font-size:4.9px;line-height:5px;color:#151515;font-weight:bold">rabacie</span><span class="t n" style="left:19.55px;transform:translateX(-50%);top:11px;font-size:4.9px;line-height:5px;color:#151515;font-weight:bold">dopuszczalnym</span></div><div style="left:255px;top:221px;width:39px;height:16px;overflow:hidden"><span class="t n" style="left:19.55px;transform:translateX(-50%);top:1px;font-size:4.9px;line-height:5px;color:#151515;font-weight:bold">Cena netto po</span><span class="t n" style="left:19.55px;transform:translateX(-50%);top:6px;font-size:4.9px;line-height:5px;color:#151515;font-weight:bold">rabacie</span><span class="t n" style="left:19.55px;transform:translateX(-50%);top:12px;font-size:4.9px;line-height:5px;color:#151515;font-weight:bold">domyślnym</span></div><div style="left:255px;top:237px;width:39px;height:17px;overflow:hidden"><span class="t n" style="left:19.55px;transform:translateX(-50%);top:1px;font-size:4.9px;line-height:5px;color:#151515;font-weight:bold">Cena brutto po</span><span class="t n" style="left:19.55px;transform:translateX(-50%);top:6px;font-size:4.9px;line-height:5px;color:#151515;font-weight:bold">rabacie</span><span class="t n" style="left:19.55px;transform:translateX(-50%);top:12px;font-size:4.9px;line-height:5px;color:#151515;font-weight:bold">domyślnym</span></div><div style="left:306px;top:100px;width:39px;height:13px;overflow:hidden"><span class="t n" style="left:19.45px;transform:translateX(-50%);top:4px;font-size:4.9px;line-height:5px;color:#151515;font-weight:bold">Grupa</span></div><div style="left:306px;top:112px;width:39px;height:13px;overflow:hidden"><span class="t n" style="left:19.45px;transform:translateX(-50%);top:5px;font-size:4.9px;line-height:5px;color:#151515;font-weight:bold">PKWiU</span></div><div style="left:306px;top:125px;width:45px;height:16px;overflow:hidden"><span class="t n" style="left:22.85px;transform:translateX(-50%);top:4px;font-size:4.9px;line-height:5px;color:#151515;font-weight:bold">Marża po rabacie</span><span class="t n" style="left:22.85px;transform:translateX(-50%);top:9px;font-size:4.9px;line-height:5px;color:#151515;font-weight:bold">dopuszczalnym</span></div><div style="left:306px;top:142px;width:45px;height:15px;overflow:hidden"><span class="t n" style="left:22.85px;transform:translateX(-50%);top:3px;font-size:4.9px;line-height:5px;color:#151515;font-weight:bold">Narzut po rabacie</span><span class="t n" style="left:22.85px;transform:translateX(-50%);top:9px;font-size:4.9px;line-height:5px;color:#151515;font-weight:bold">dopuszczalnym</span></div><div style="left:306px;top:157px;width:39px;height:13px;overflow:hidden"><span class="t n" style="left:19.45px;transform:translateX(-50%);top:2px;font-size:4.9px;line-height:5px;color:#151515;font-weight:bold">Zysk po rabacie</span><span class="t n" style="left:19.45px;transform:translateX(-50%);top:7px;font-size:4.9px;line-height:5px;color:#151515;font-weight:bold">dopuszczalnym</span></div><div style="left:306px;top:170px;width:45px;height:13px;overflow:hidden"><span class="t n" style="left:22.85px;transform:translateX(-50%);top:2px;font-size:4.9px;line-height:5px;color:#151515;font-weight:bold">Marża po rabacie</span><span class="t n" style="left:22.85px;transform:translateX(-50%);top:7px;font-size:4.9px;line-height:5px;color:#151515;font-weight:bold">domyślnym</span></div><div style="left:306px;top:183px;width:45px;height:13px;overflow:hidden"><span class="t n" style="left:22.85px;transform:translateX(-50%);top:2px;font-size:4.9px;line-height:5px;color:#151515;font-weight:bold">Narzut po rabacie</span><span class="t n" style="left:22.85px;transform:translateX(-50%);top:7px;font-size:4.9px;line-height:5px;color:#151515;font-weight:bold">domyślnym</span></div><div style="left:306px;top:196px;width:39px;height:12px;overflow:hidden"><span class="t n" style="left:19.45px;transform:translateX(-50%);top:1px;font-size:4.9px;line-height:5px;color:#151515;font-weight:bold">Zysk po rabacie</span><span class="t n" style="left:19.45px;transform:translateX(-50%);top:7px;font-size:4.9px;line-height:5px;color:#151515;font-weight:bold">domyślnym</span></div><div style="left:306px;top:208px;width:39px;height:13px;overflow:hidden"><span class="t n" style="left:19.45px;transform:translateX(-50%);top:5px;font-size:4.9px;line-height:5px;color:#151515;font-weight:bold">Rodzaj</span></div><div style="left:306px;top:221px;width:39px;height:14px;overflow:hidden"><span class="t n" style="left:19.45px;transform:translateX(-50%);top:5px;font-size:4.9px;line-height:5px;color:#151515;font-weight:bold">Próg cenowy</span></div><div style="left:306px;top:234px;width:39px;height:13px;overflow:hidden"><span class="t n" style="left:19.45px;transform:translateX(-50%);top:2px;font-size:4.9px;line-height:5px;color:#151515;font-weight:bold">Kurs ceny</span><span class="t n" style="left:19.45px;transform:translateX(-50%);top:7px;font-size:4.9px;line-height:5px;color:#151515;font-weight:bold">bazowej</span></div><div style="left:358px;top:100px;width:38px;height:13px;overflow:hidden"><span class="t n" style="left:18.85px;transform:translateX(-50%);top:1px;font-size:4.9px;line-height:5px;color:#151515;font-weight:bold">Kurs podstawy</span><span class="t n" style="left:18.85px;transform:translateX(-50%);top:7px;font-size:4.9px;line-height:5px;color:#151515;font-weight:bold">kalkulacji</span></div><div style="left:358px;top:112px;width:38px;height:13px;overflow:hidden"><span class="t n" style="left:18.85px;transform:translateX(-50%);top:2px;font-size:4.9px;line-height:5px;color:#151515;font-weight:bold">Minimalna</span><span class="t n" style="left:18.85px;transform:translateX(-50%);top:8px;font-size:4.9px;line-height:5px;color:#151515;font-weight:bold">marża</span></div><div style="left:358px;top:125px;width:38px;height:13px;overflow:hidden"><span class="t n" style="left:18.85px;transform:translateX(-50%);top:5px;font-size:4.9px;line-height:5px;color:#151515;font-weight:bold">Kod CN</span></div><div style="left:358px;top:145px;width:38px;height:12px;overflow:hidden"><span class="t n" style="left:18.85px;transform:translateX(-50%);top:1px;font-size:4.9px;line-height:5px;color:#151515;font-weight:bold">Graficzny kod</span><span class="t n" style="left:18.85px;transform:translateX(-50%);top:7px;font-size:4.9px;line-height:5px;color:#151515;font-weight:bold">kreskowy</span></div>
<div style="left:370.2px;top:195.5px;width:32.4px;height:12.6px;background:rgba(255,255,255,0.86);border:0.5px solid #e3e6ec;box-sizing:border-box"></div>
<svg class="a" style="left:368px;top:193px" width="42" height="23" viewBox="368 193 42 23"><g stroke="#b4b4b4" stroke-width="0.5" fill="none"><path d="M370.3 211.9H402.4M405.4 195.7V208"/></g><g stroke="#8c8c8c" stroke-width="0.5"><path d="M370.4 210.4V213.4M402.4 210.4V213.4M403.9 195.7H406.9M403.9 208H406.9"/></g><rect x="382.6" y="210.2" width="7.8" height="3.4" fill="#f6f8fb"/><rect x="404" y="198.4" width="2.9" height="7.6" fill="#f6f8fb"/></svg>
<span class="t" style="left:386.5px;top:211px;font-size:2.6px;line-height:3px;color:#8a8a8a;font-weight:normal;transform:translateX(-50%);">2,00</span>
<span class="t" style="left:405.5px;top:202.2px;font-size:2.5px;color:#8a8a8a;line-height:3px;transform:translate(-50%,-50%) rotate(90deg)">0,80</span>
<svg class="a" style="left:200px;top:265px" width="180" height="115" viewBox="200 265 180 115"><g fill="#fff" stroke="#3a3a3a" stroke-width="0.75"><rect x="204.90" y="269.40" width="37.80" height="5.80"/><rect x="249.60" y="269.40" width="38.00" height="5.80"/><rect x="291.10" y="269.40" width="37.80" height="5.80"/><rect x="204.90" y="278.93" width="37.80" height="5.80"/><rect x="249.60" y="278.93" width="38.00" height="5.80"/><rect x="291.10" y="278.93" width="37.80" height="5.80"/><rect x="204.90" y="288.46" width="37.80" height="5.80"/><rect x="249.60" y="288.46" width="38.00" height="5.80"/><rect x="291.10" y="288.46" width="37.80" height="5.80"/><rect x="204.90" y="297.99" width="37.80" height="5.80"/><rect x="249.60" y="297.99" width="38.00" height="5.80"/><rect x="291.10" y="297.99" width="37.80" height="5.80"/><rect x="204.90" y="307.52" width="37.80" height="5.80"/><rect x="249.60" y="307.52" width="38.00" height="5.80"/><rect x="291.10" y="307.52" width="37.80" height="5.80"/><rect x="204.90" y="317.05" width="37.80" height="5.80"/><rect x="249.60" y="317.05" width="38.00" height="5.80"/><rect x="291.10" y="317.05" width="37.80" height="5.80"/><rect x="204.90" y="326.58" width="37.80" height="5.80"/><rect x="249.60" y="326.58" width="38.00" height="5.80"/><rect x="291.10" y="326.58" width="37.80" height="5.80"/><rect x="204.90" y="336.11" width="37.80" height="5.80"/><rect x="249.60" y="336.11" width="38.00" height="5.80"/><rect x="291.10" y="336.11" width="37.80" height="5.80"/><rect x="204.90" y="345.64" width="37.80" height="5.80"/><rect x="249.60" y="345.64" width="38.00" height="5.80"/><rect x="291.10" y="345.64" width="37.80" height="5.80"/><rect x="204.90" y="355.17" width="37.80" height="5.80"/><rect x="249.60" y="355.17" width="38.00" height="5.80"/><rect x="291.10" y="355.17" width="37.80" height="5.80"/><rect x="204.90" y="364.70" width="37.80" height="5.80"/><rect x="249.60" y="364.70" width="38.00" height="5.80"/><rect x="291.10" y="364.70" width="37.80" height="5.80"/><rect x="332.10" y="269.40" width="38.30" height="5.80"/><rect x="332.10" y="278.93" width="38.30" height="5.80"/><rect x="332.10" y="288.46" width="38.30" height="5.80"/></g></svg>
<div style="left:205px;top:269px;width:38px;height:6px;overflow:hidden"><span class="t" style="left:18.80px;transform:translateX(-50%);top:1px;font-size:4.3px;line-height:5px;color:#111;font-weight:normal">{Line}</span></div><div style="left:250px;top:269px;width:38px;height:6px;overflow:hidden"><span class="t" style="left:1.60px;top:-1px;font-size:4.3px;line-height:5px;color:#111;font-weight:normal">{Pozycje.RabatDo</span><span class="t" style="left:1.60px;top:3px;font-size:4.3px;line-height:5px;color:#111;font-weight:normal">puszczalny}.1000}</span></div><div style="left:291px;top:269px;width:38px;height:6px;overflow:hidden"><span class="t" style="left:2.10px;top:1px;font-size:4.3px;line-height:5px;color:#111;font-weight:normal">{Pozycje.Grupa}</span></div><div style="left:205px;top:279px;width:38px;height:6px;overflow:hidden"><span class="t" style="left:1.90px;top:0px;font-size:4.3px;line-height:5px;color:#111;font-weight:normal">{Pozycje.Nazwa}</span></div><div style="left:250px;top:279px;width:38px;height:6px;overflow:hidden"><span class="t" style="left:1.60px;top:0px;font-size:4.3px;line-height:5px;color:#111;font-weight:normal">{Pozycje.RabatDo</span></div><div style="left:291px;top:279px;width:38px;height:6px;overflow:hidden"><span class="t" style="left:2.10px;top:0px;font-size:4.3px;line-height:5px;color:#111;font-weight:normal">{Pozycje.PKWiU}</span></div><div style="left:205px;top:288px;width:38px;height:6px;overflow:hidden"><span class="t" style="left:1.90px;top:1px;font-size:4.3px;line-height:5px;color:#111;font-weight:normal">{Pozycje.Symbol}</span></div><div style="left:250px;top:288px;width:38px;height:6px;overflow:hidden"><span class="t" style="left:1.60px;top:1px;font-size:4.3px;line-height:5px;color:#111;font-weight:normal">{Pozycje.Opis}</span></div><div style="left:291px;top:288px;width:38px;height:6px;overflow:hidden"><span class="t" style="left:35.90px;transform:translateX(-100%);top:-1px;font-size:4.3px;line-height:5px;color:#111;font-weight:normal">"{0:F2}",</span><span class="t" style="left:35.90px;transform:translateX(-100%);top:3px;font-size:4.3px;line-height:5px;color:#111;font-weight:normal">Pozycje.MarzaPo</span></div><div style="left:205px;top:298px;width:38px;height:6px;overflow:hidden"><span class="t" style="left:1.90px;top:-2px;font-size:4.3px;line-height:5px;color:#111;font-weight:normal">{Pozycje.Jednostk</span><span class="t" style="left:1.90px;top:3px;font-size:4.3px;line-height:5px;color:#111;font-weight:normal">a.Nazwa}</span></div><div style="left:250px;top:298px;width:38px;height:6px;overflow:hidden"><span class="t" style="left:1.60px;top:0px;font-size:4.3px;line-height:5px;color:#111;font-weight:normal">{Pozycje.Uwagi}</span></div><div style="left:291px;top:298px;width:38px;height:6px;overflow:hidden"><span class="t" style="left:35.90px;transform:translateX(-100%);top:-2px;font-size:4.3px;line-height:5px;color:#111;font-weight:normal">"{0:F2}",</span><span class="t" style="left:35.90px;transform:translateX(-100%);top:3px;font-size:4.3px;line-height:5px;color:#111;font-weight:normal">Pozycje.NarzutPo</span></div><div style="left:205px;top:307px;width:38px;height:6px;overflow:hidden"><span class="t" style="left:35.70px;transform:translateX(-100%);top:1px;font-size:4.3px;line-height:5px;color:#111;font-weight:normal">Waluty + "}":</span></div><div style="left:250px;top:307px;width:38px;height:6px;overflow:hidden"><span class="t" style="left:1.60px;top:-1px;font-size:4.3px;line-height:5px;color:#111;font-weight:normal">{Pozycje.Numeryc</span><span class="t" style="left:1.60px;top:3px;font-size:4.3px;line-height:5px;color:#111;font-weight:normal">znyKodKreskowy}</span></div><div style="left:291px;top:307px;width:38px;height:6px;overflow:hidden"><span class="t" style="left:2.10px;top:1px;font-size:4.3px;line-height:5px;color:#111;font-weight:normal">abacieDopuszczal</span></div><div style="left:205px;top:317px;width:38px;height:6px;overflow:hidden"><span class="t" style="left:35.70px;transform:translateX(-100%);top:1px;font-size:4.3px;line-height:5px;color:#111;font-weight:normal">Waluty + "}":</span></div><div style="left:250px;top:317px;width:38px;height:6px;overflow:hidden"><span class="t" style="left:1.60px;top:-2px;font-size:4.3px;line-height:5px;color:#111;font-weight:normal">{Pozycje.WalutaCe</span><span class="t" style="left:1.60px;top:3px;font-size:4.3px;line-height:5px;color:#111;font-weight:normal">nyBazowej.Nazwa}</span></div><div style="left:291px;top:317px;width:38px;height:6px;overflow:hidden"><span class="t" style="left:35.90px;transform:translateX(-100%);top:1px;font-size:4.3px;line-height:5px;color:#111;font-weight:normal">"{0:F2}",</span></div><div style="left:205px;top:326px;width:38px;height:6px;overflow:hidden"><span class="t" style="left:35.70px;transform:translateX(-100%);top:1px;font-size:4.3px;line-height:5px;color:#111;font-weight:normal">Waluty + "}":</span></div><div style="left:250px;top:326px;width:38px;height:6px;overflow:hidden"><span class="t" style="left:1.60px;top:-1px;font-size:4.3px;line-height:5px;color:#111;font-weight:normal">{Pozycje.Blokada</span><span class="t" style="left:1.60px;top:3px;font-size:4.3px;line-height:5px;color:#111;font-weight:normal">Ceny}</span></div><div style="left:291px;top:326px;width:38px;height:6px;overflow:hidden"><span class="t" style="left:35.90px;transform:translateX(-100%);top:1px;font-size:4.3px;line-height:5px;color:#111;font-weight:normal">"{0:F2}",</span></div><div style="left:205px;top:336px;width:38px;height:6px;overflow:hidden"><span class="t" style="left:35.70px;transform:translateX(-100%);top:1px;font-size:4.3px;line-height:5px;color:#111;font-weight:normal">Waluty + "}":</span></div><div style="left:250px;top:336px;width:38px;height:6px;overflow:hidden"><span class="t" style="left:1.60px;top:1px;font-size:4.3px;line-height:5px;color:#111;font-weight:normal">ttoPoRabacieDopu</span></div><div style="left:291px;top:336px;width:38px;height:6px;overflow:hidden"><span class="t" style="left:2.10px;top:1px;font-size:4.3px;line-height:5px;color:#111;font-weight:normal">abacieDomyslnym</span></div><div style="left:205px;top:346px;width:38px;height:6px;overflow:hidden"><span class="t" style="left:35.70px;transform:translateX(-100%);top:-2px;font-size:4.3px;line-height:5px;color:#111;font-weight:normal">"" : null, "Format</span><span class="t" style="left:35.70px;transform:translateX(-100%);top:2px;font-size:4.3px;line-height:5px;color:#111;font-weight:normal">("{0:F2"</span></div><div style="left:250px;top:346px;width:38px;height:6px;overflow:hidden"><span class="t" style="left:1.60px;top:0px;font-size:4.3px;line-height:5px;color:#111;font-weight:normal">ttoPoRabacieDop</span></div><div style="left:291px;top:346px;width:38px;height:6px;overflow:hidden"><span class="t" style="left:2.10px;top:0px;font-size:4.3px;line-height:5px;color:#111;font-weight:normal">{Pozycje.Rodzaj}</span></div><div style="left:205px;top:355px;width:38px;height:6px;overflow:hidden"><span class="t" style="left:35.70px;transform:translateX(-100%);top:-2px;font-size:4.3px;line-height:5px;color:#111;font-weight:normal">"" : null, "Format</span><span class="t" style="left:35.70px;transform:translateX(-100%);top:3px;font-size:4.3px;line-height:5px;color:#111;font-weight:normal">("{0:F2"</span></div><div style="left:250px;top:355px;width:38px;height:6px;overflow:hidden"><span class="t" style="left:1.60px;top:1px;font-size:4.3px;line-height:5px;color:#111;font-weight:normal">ttoPoRabacieDom</span></div><div style="left:291px;top:355px;width:38px;height:6px;overflow:hidden"><span class="t" style="left:2.10px;top:-2px;font-size:4.3px;line-height:5px;color:#111;font-weight:normal">{Pozycje.ProgCen</span><span class="t" style="left:2.10px;top:3px;font-size:4.3px;line-height:5px;color:#111;font-weight:normal">owy.Nazwa}</span></div><div style="left:205px;top:365px;width:38px;height:6px;overflow:hidden"><span class="t" style="left:35.70px;transform:translateX(-100%);top:0px;font-size:4.3px;line-height:5px;color:#111;font-weight:normal">{Pozycje.Zysk}</span></div><div style="left:250px;top:365px;width:38px;height:6px;overflow:hidden"><span class="t" style="left:1.60px;top:0px;font-size:4.3px;line-height:5px;color:#111;font-weight:normal">ttoPoRabacieDom</span></div><div style="left:291px;top:365px;width:38px;height:6px;overflow:hidden"><span class="t" style="left:2.10px;top:-2px;font-size:4.3px;line-height:5px;color:#111;font-weight:normal">{Pozycje.KursCeny</span><span class="t" style="left:2.10px;top:2px;font-size:4.3px;line-height:5px;color:#111;font-weight:normal">Bazowej}</span></div><div style="left:332px;top:269px;width:38px;height:6px;overflow:hidden"><span class="t" style="left:2.10px;top:-1px;font-size:4.3px;line-height:5px;color:#111;font-weight:normal">{Pozycje.KursCeny</span><span class="t" style="left:2.10px;top:3px;font-size:4.3px;line-height:5px;color:#111;font-weight:normal">Podstawy}</span></div><div style="left:332px;top:279px;width:38px;height:6px;overflow:hidden"><span class="t" style="left:2.10px;top:0px;font-size:4.3px;line-height:5px;color:#111;font-weight:normal">{Pozycje.Minimaln</span></div><div style="left:332px;top:288px;width:38px;height:6px;overflow:hidden"><span class="t" style="left:2.10px;top:1px;font-size:4.3px;line-height:5px;color:#111;font-weight:normal">{Pozycje.KodCN}</span></div>
<svg class="a" style="left:200px;top:265px" width="180" height="115" viewBox="200 265 180 115"><g fill="#f2a32e"><circle cx="208.50" cy="273.70" r="1.3"/><circle cx="253.20" cy="273.70" r="1.3"/><circle cx="294.70" cy="273.70" r="1.3"/><circle cx="208.50" cy="283.23" r="1.3"/><circle cx="253.20" cy="283.23" r="1.3"/><circle cx="294.70" cy="283.23" r="1.3"/><circle cx="208.50" cy="292.76" r="1.3"/><circle cx="253.20" cy="292.76" r="1.3"/><circle cx="294.70" cy="292.76" r="1.3"/><circle cx="208.50" cy="302.29" r="1.3"/><circle cx="253.20" cy="302.29" r="1.3"/><circle cx="294.70" cy="302.29" r="1.3"/><circle cx="208.50" cy="311.82" r="1.3"/><circle cx="253.20" cy="311.82" r="1.3"/><circle cx="294.70" cy="311.82" r="1.3"/><circle cx="208.50" cy="321.35" r="1.3"/><circle cx="253.20" cy="321.35" r="1.3"/><circle cx="294.70" cy="321.35" r="1.3"/><circle cx="208.50" cy="330.88" r="1.3"/><circle cx="253.20" cy="330.88" r="1.3"/><circle cx="294.70" cy="330.88" r="1.3"/><circle cx="208.50" cy="340.41" r="1.3"/><circle cx="253.20" cy="340.41" r="1.3"/><circle cx="294.70" cy="340.41" r="1.3"/><circle cx="208.50" cy="349.94" r="1.3"/><circle cx="253.20" cy="349.94" r="1.3"/><circle cx="294.70" cy="349.94" r="1.3"/><circle cx="208.50" cy="359.47" r="1.3"/><circle cx="253.20" cy="359.47" r="1.3"/><circle cx="294.70" cy="359.47" r="1.3"/><circle cx="208.50" cy="369.00" r="1.3"/><circle cx="253.20" cy="369.00" r="1.3"/><circle cx="294.70" cy="369.00" r="1.3"/><circle cx="335.70" cy="273.70" r="1.3"/><circle cx="335.70" cy="283.23" r="1.3"/><circle cx="335.70" cy="292.76" r="1.3"/></g></svg>
<svg class="a" style="left:335px;top:297px" width="33" height="21" viewBox="335 297 33 21" font-family="Liberation Sans, sans-serif"><rect x="335.5" y="297.5" width="32" height="19.8" fill="#fff" stroke="#8f8f8f" stroke-width="0.6"/><rect x="338.60" y="298.4" width="1.0" height="15.2" fill="#2a2a2a"/><rect x="340.05" y="298.4" width="1.4" height="15.2" fill="#2a2a2a"/><rect x="342.25" y="298.4" width="0.7" height="15.2" fill="#2a2a2a"/><rect x="343.40" y="298.4" width="0.7" height="15.2" fill="#2a2a2a"/><rect x="344.60" y="298.4" width="0.7" height="15.2" fill="#2a2a2a"/><rect x="346.10" y="298.4" width="0.7" height="15.2" fill="#2a2a2a"/><rect x="347.25" y="298.4" width="0.7" height="15.2" fill="#2a2a2a"/><rect x="348.45" y="298.4" width="1.4" height="15.2" fill="#2a2a2a"/><rect x="350.30" y="298.4" width="0.7" height="15.2" fill="#2a2a2a"/><rect x="351.45" y="298.4" width="1.4" height="15.2" fill="#2a2a2a"/><rect x="353.30" y="298.4" width="0.7" height="15.2" fill="#2a2a2a"/><rect x="354.45" y="298.4" width="0.7" height="15.2" fill="#2a2a2a"/><rect x="355.95" y="298.4" width="1.4" height="15.2" fill="#2a2a2a"/><rect x="357.80" y="298.4" width="0.7" height="15.2" fill="#2a2a2a"/><rect x="358.95" y="298.4" width="0.7" height="15.2" fill="#2a2a2a"/><rect x="360.15" y="298.4" width="1.4" height="15.2" fill="#2a2a2a"/><rect x="362.00" y="298.4" width="0.7" height="15.2" fill="#2a2a2a"/><rect x="363.50" y="298.4" width="1.0" height="15.2" fill="#2a2a2a"/><rect x="365.30" y="298.4" width="0.7" height="15.2" fill="#2a2a2a"/><rect x="339.5" y="313.7" width="26" height="3" fill="#fff"/><text x="352.4" y="316.4" font-size="3" fill="#222" text-anchor="middle" textLength="24">0123456789012</text><rect x="335.4" y="297.3" width="1.3" height="1.3" fill="#e03030"/><circle cx="337.8" cy="315.3" r="1.3" fill="#f2a32e"/></svg>
<span class="t" style="left:332.6px;top:320px;font-size:7.3px;line-height:9px;color:#a0a0a0;font-weight:normal;">_PanelGridDT</span>
<svg class="a" style="left:205px;top:378.4px" width="4" height="4"><circle cx="1.6" cy="1.8" r="1.1" fill="#f0a030"/></svg>
<div style="left:175px;top:387px;width:508px;height:0.7px;background:#cfcfcf"></div>
<span class="t" style="left:183px;top:389px;font-size:5px;line-height:6px;color:#cfcfcf;font-weight:normal;transform:translateX(-50%);">‹</span>
<span class="t" style="left:194px;top:389px;font-size:5px;line-height:6px;color:#cfcfcf;font-weight:normal;transform:translateX(-50%);">›</span>
<span class="t" style="left:235px;top:390px;font-size:4.75px;line-height:5px;color:#333;font-weight:normal;transform:translateX(-50%);">Raport - Strona pierwsza</span>
<span class="t" style="left:300px;top:390px;font-size:4.8px;line-height:5px;color:#222;font-weight:normal;transform:translateX(-50%);">Raport - Strona dodatkowa</span>
<div style="left:271px;top:395px;width:58px;height:0.9px;background:#2a6fc9"></div>
<span class="t" style="left:345.4px;top:390px;font-size:4.75px;line-height:5px;color:#333;font-weight:normal;transform:translateX(-50%);">Code</span>
<div style="left:355.2px;top:389.3px;width:0.6px;height:6.5px;background:#bbb"></div>
<svg class="a" style="left:359px;top:389px" width="6" height="6" viewBox="359 389 6 6"><path d="M359.6 392H364.6M362.1 389.5V394.5" stroke="#2c2c2c" stroke-width="1"/></svg>
<div style="left:265.5px;top:387.8px;width:69.2px;height:9.8px;border:1px solid #e8383d;border-radius:2.5px;box-sizing:border-box"></div>
<div style="left:678.4px;top:79.4px;width:1.9px;height:195.5px;background:#a2a2a2;border-radius:1px"></div>
<svg class="a" style="left:0;top:398px" width="684" height="14" viewBox="0 398 684 14"><rect x="0" y="399.4" width="684" height="11" fill="#2b579a"/><rect x="0" y="410.3" width="684" height="1.7" fill="#0b0b0b"/></svg>
<span class="t" style="left:5.4px;top:403px;font-size:4.6px;line-height:5px;color:#fff;font-weight:normal;">Centimeters</span>
<svg class="a" style="left:32px;top:403.4px" width="4" height="3"><path d="M0.4 2.3 L2 0.6 L3.6 2.3" fill="none" stroke="#fff" stroke-width="0.6"/></svg>
<div style="left:37px;top:401.4px;width:0.6px;height:7.6px;background:#c8d4ea"></div>
<svg class="a" style="left:40.6px;top:403px" width="4" height="5"><path d="M0.4 0.2 L3 2.3 L0.4 4.4 Z" fill="#fff"/></svg>
<span class="t" style="left:46.8px;top:403px;font-size:4.5px;line-height:5px;color:#fff;font-weight:normal;">Check for Issues</span>
<div style="left:84px;top:401.4px;width:0.6px;height:7.6px;background:#c8d4ea"></div>
<span class="t" style="left:87.3px;top:403px;font-size:4.5px;line-height:5px;color:#fff;font-weight:normal;">_PanelGridHD</span>
<div style="left:117.8px;top:401.4px;width:0.6px;height:7.6px;background:#c8d4ea"></div>
<span class="t" style="left:122px;top:403px;font-size:4.5px;line-height:5px;color:#fff;font-weight:normal;">X: -0,11 Y: 4,23</span>
<svg class="a" style="left:556px;top:400px" width="44" height="10" viewBox="556 400 44 10"><rect x="558.8000000000001" y="402.4" width="4.8" height="5.8" fill="none" stroke="#e8eefb" stroke-width="0.6"/><path d="M560.0 405.3 H562.4000000000001" stroke="#e8eefb" stroke-width="0.7"/><rect x="570.1" y="402.4" width="4.8" height="5.8" fill="none" stroke="#e8eefb" stroke-width="0.6"/><path d="M572.5 402.4 V408.2 M570.1 405.3 H574.9" stroke="#e8eefb" stroke-width="0.5"/><rect x="581.3000000000001" y="402.4" width="4.8" height="5.8" fill="none" stroke="#e8eefb" stroke-width="0.6"/><path d="M582.5 403.9 H584.9000000000001 M582.5 405.3 H584.9000000000001 M582.5 406.7 H584.9000000000001" stroke="#e8eefb" stroke-width="0.5"/><rect x="592.6" y="402.4" width="4.8" height="5.8" fill="none" stroke="#e8eefb" stroke-width="0.6"/><rect x="592.6" y="405.6" width="4.8" height="2.6" fill="#e8eefb"/></svg>
<span class="t" style="left:614px;top:403px;font-size:4.7px;line-height:5px;color:#fff;font-weight:normal;transform:translateX(-50%);">100%</span>
<div style="left:628.4px;top:405px;width:2.8px;height:0.7px;background:#fff"></div>
<div style="left:633.5px;top:405.1px;width:39.5px;height:0.6px;background:#c8d4ea"></div>
<div style="left:652.1px;top:402.9px;width:1.9px;height:4.8px;background:#fff;border-radius:0.6px"></div>
<div style="left:674.8px;top:405px;width:2.8px;height:0.7px;background:#fff"></div>
<div style="left:675.85px;top:403.95px;width:0.7px;height:2.8px;background:#fff"></div>
<div style="left:14.6px;top:69px;width:54.8px;height:138px;background:#fff;border:0.6px solid #c6c6c6;box-sizing:border-box;box-shadow:0.6px 0.8px 1.6px rgba(0,0,0,0.28)"></div>
<div style="left:14.4px;top:70px;width:54.8px;height:10.5px;background:#d2d2d2;border:1px solid #e8383d;border-radius:2.2px;box-sizing:border-box"></div>
<span class="t" style="left:30.2px;top:73px;font-size:4.6px;line-height:5px;color:#333;font-weight:normal;">Text</span>
<span class="t" style="left:30.2px;top:84px;font-size:4.6px;line-height:5px;color:#333;font-weight:normal;">Rich Text</span>
<span class="t" style="left:30.2px;top:94px;font-size:4.6px;line-height:5px;color:#333;font-weight:normal;">Text in Cells</span>
<span class="t" style="left:30.2px;top:105px;font-size:4.6px;line-height:5px;color:#333;font-weight:normal;">Image</span>
<span class="t" style="left:30.2px;top:116px;font-size:4.6px;line-height:5px;color:#333;font-weight:normal;">Sub-Report</span>
<span class="t" style="left:30.2px;top:126px;font-size:4.6px;line-height:5px;color:#333;font-weight:normal;">Panel</span>
<span class="t" style="left:30.2px;top:137px;font-size:4.6px;line-height:5px;color:#333;font-weight:normal;">Clone</span>
<span class="t" style="left:30.2px;top:147px;font-size:4.6px;line-height:5px;color:#333;font-weight:normal;">Check Box</span>
<span class="t" style="left:30.2px;top:158px;font-size:4.6px;line-height:5px;color:#333;font-weight:normal;">ZIP Code</span>
<span class="t" style="left:30.2px;top:168px;font-size:4.6px;line-height:5px;color:#333;font-weight:normal;">Table</span>
<span class="t" style="left:30.2px;top:179px;font-size:4.6px;line-height:5px;color:#333;font-weight:normal;">Cross-Tab</span>
<span class="t" style="left:30.2px;top:189px;font-size:4.6px;line-height:5px;color:#333;font-weight:normal;">Sparkline</span>
<span class="t" style="left:30.2px;top:200px;font-size:4.6px;line-height:5px;color:#333;font-weight:normal;">Math Formula</span>
<svg class="a" style="left:15px;top:69px" width="16" height="138" viewBox="15 69 16 138"><rect x="18.9" y="72.90" width="6.2" height="5" fill="#fff" stroke="#666" stroke-width="0.65"/><path d="M20 74.70 H24" stroke="#777" stroke-width="0.55"/><rect x="18.9" y="83.46" width="6.2" height="5" fill="#fff" stroke="#666" stroke-width="0.65"/><rect x="19.8" y="84.36" width="2.2" height="2.2" fill="#2f7bd6"/><path d="M22.7 84.76 H24.2 M22.7 85.96 H24.2 M19.8 87.36 H24.2" stroke="#888" stroke-width="0.45"/><rect x="18.9" y="94.02" width="6.2" height="5" fill="#fff" stroke="#666" stroke-width="0.65"/><rect x="19.8" y="95.12" width="2.4" height="2.6" fill="#2f7bd6"/><path d="M23 94.02 V99.02 M18.9 98.12 H25.1" stroke="#888" stroke-width="0.45"/><rect x="18.9" y="104.58" width="6.2" height="5" fill="#fff" stroke="#666" stroke-width="0.65"/><path d="M19.2 109.28 L21.2 106.68 L22.8 108.28 L23.8 107.28 L24.8 109.28 Z" fill="#2f7bd6"/><rect x="19.6" y="115.64" width="4.8" height="4.4" fill="#fff" stroke="#666" stroke-width="0.6"/><rect x="20.6" y="114.64" width="3" height="1.6" fill="#3aa655"/><rect x="19.6" y="126.00" width="4.8" height="4.6" fill="#fff" stroke="#888" stroke-width="0.6"/><rect x="19.4" y="136.36" width="3.8" height="3.8" rx="0.6" fill="#fff" stroke="#999" stroke-width="0.6"/><rect x="20.8" y="137.56" width="3.8" height="3.8" rx="0.6" fill="#fff" stroke="#999" stroke-width="0.6"/><rect x="19.6" y="146.92" width="4.8" height="4.8" fill="#fff" stroke="#555" stroke-width="0.6"/><rect x="21" y="148.32" width="2" height="2" fill="#2f7bd6"/><path d="M19.6 157.68 H21.6 L19.8 162.08 M22.4 157.68 H24.4 V159.88 H22.4 V162.08 H24.4" fill="none" stroke="#555" stroke-width="0.6"/><rect x="19.4" y="168.04" width="5.2" height="4.8" fill="#c4c4c4" stroke="#666" stroke-width="0.7"/><path d="M21.1 168.04 V172.84 M22.9 168.04 V172.84" stroke="#5e5e5e" stroke-width="0.6"/><rect x="19.4" y="178.60" width="5.2" height="4.8" fill="#fff" stroke="#555" stroke-width="0.7"/><rect x="19.4" y="178.60" width="5.2" height="1.4" fill="#777"/><rect x="21.6" y="180.80" width="2.6" height="2.2" fill="#2f7bd6"/><path d="M19.6 189.16 V193.96" stroke="#555" stroke-width="0.6"/><path d="M19.6 189.96 H24.4 M19.6 193.16 H24.4" stroke="#555" stroke-width="0.5"/><path d="M19.8 192.16 L21.6 190.96 L23 191.96 L24.4 190.76" fill="none" stroke="#2f7bd6" stroke-width="0.6"/><path d="M19.4 202.12 L20.2 201.72 L21 204.12 L21.8 199.92 H24.6" fill="none" stroke="#555" stroke-width="0.6"/><path d="M22.6 201.72 L24 203.52 M24 201.72 L22.6 203.52" stroke="#555" stroke-width="0.5"/></svg>
<svg class="a" style="left:11.00px;top:100.40px" width="18.20" height="19.40" viewBox="11.00 100.40 18.20 19.40"><path d="M28.20 118.80 L18.42 105.80 L20.84 103.56 L12.00 101.40 L13.52 110.37 L15.93 108.12 Z" fill="#e0343c"/></svg>
<div class="bd" style="left:13.6px;top:115.8px">2</div>
<div class="bd" style="left:71.5px;top:68.5px">3</div>
<div class="bd" style="left:294.9px;top:373.9px">1</div>
<svg class="a" style="left:404.20px;top:209.79px" width="27.50" height="17.01" viewBox="404.20 209.79 27.50 17.01"><path d="M430.70 225.80 L412.24 213.39 L413.73 210.79 L405.20 211.20 L409.16 218.77 L410.65 216.17 Z" fill="#e0343c"/></svg>
<div class="bd" style="left:420.9px;top:205.5px">4</div>
<div style="left:0px;top:0px;width:1px;height:412px;background:#060606"></div>
<div style="left:682.4px;top:0px;width:1.6px;height:412px;background:#060606"></div>
</div></body></html>
